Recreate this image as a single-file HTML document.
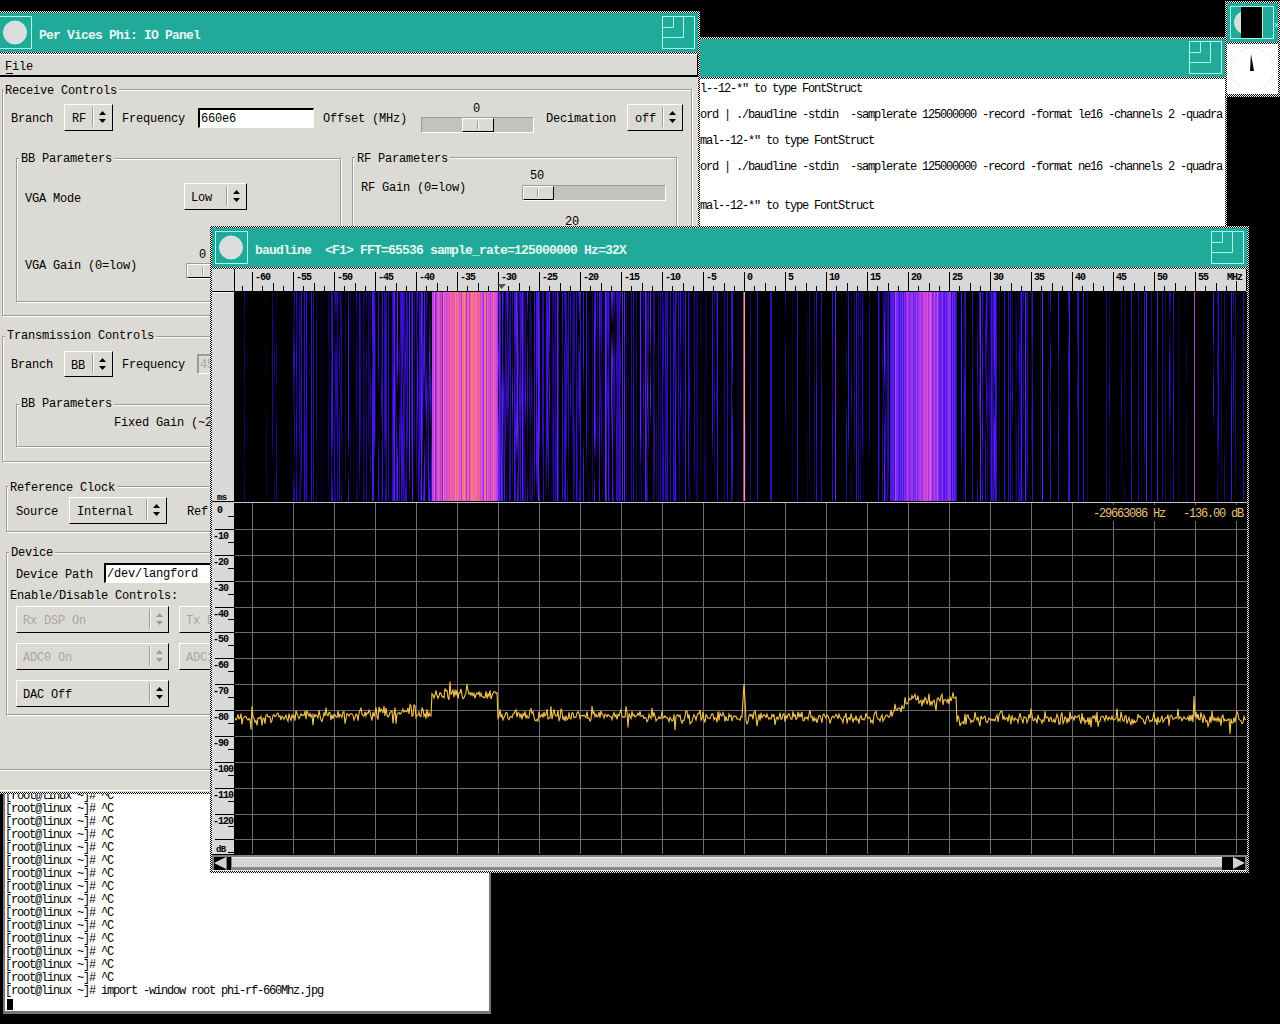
<!DOCTYPE html><html><head><meta charset="utf-8"><style>
html,body{margin:0;padding:0;background:#000;width:1280px;height:1024px;overflow:hidden;position:relative}
div,svg{position:absolute;box-sizing:border-box}
.t{white-space:pre;font-family:"Liberation Mono",monospace}
</style></head><body><div style="left:698px;top:37px;width:529px;height:200px;background:repeating-conic-gradient(#000 0 25%,#fff 0 50%) 0 0/2px 2px;"></div>
<div style="left:700px;top:39px;width:525px;height:38px;background:#21aa99"></div>
<svg style="left:1189px;top:41px" width="34" height="34"><g fill="none" stroke="#a8fcec" stroke-width="1"><rect x="0.5" y="0.5" width="32" height="32"/><path d="M0.5 21.5H21.5V0.5M0.5 11.5H11.5V0.5"/></g></svg>
<div style="left:700px;top:79px;width:525px;height:160px;background:#fff"></div>
<div class="t" style="left:700px;top:83px;font-size:12px;line-height:12px;color:#000;letter-spacing:-1.2px;">l--12-*" to type FontStruct</div>
<div class="t" style="left:700px;top:109px;font-size:12px;line-height:12px;color:#000;letter-spacing:-1.2px;">ord | ./baudline -stdin  -samplerate 125000000 -record -format le16 -channels 2 -quadra</div>
<div class="t" style="left:700px;top:135px;font-size:12px;line-height:12px;color:#000;letter-spacing:-1.2px;">mal--12-*" to type FontStruct</div>
<div class="t" style="left:700px;top:161px;font-size:12px;line-height:12px;color:#000;letter-spacing:-1.2px;">ord | ./baudline -stdin  -samplerate 125000000 -record -format ne16 -channels 2 -quadra</div>
<div class="t" style="left:700px;top:200px;font-size:12px;line-height:12px;color:#000;letter-spacing:-1.2px;">mal--12-*" to type FontStruct</div>
<div style="left:1225px;top:1px;width:55px;height:96px;background:repeating-conic-gradient(#000 0 25%,#fff 0 50%) 0 0/2px 2px;"></div>
<div style="left:1227px;top:3px;width:51px;height:39px;background:#21aa99"></div>
<svg style="left:1230px;top:6px" width="50" height="34"><circle cx="16" cy="16.5" r="11.5" fill="#dcdcdc" stroke="#c4f4ec"/><rect x="11" y="1" width="21" height="31" fill="#000"/><rect x="32" y="1" width="1" height="31" fill="#a8fcec"/><rect x="0.5" y="0.5" width="43" height="32" fill="none" stroke="#a8fcec"/><path d="M45 17L48 21M48 17L45 21" stroke="#a8fcec" stroke-width="1"/></svg>
<div style="left:1227px;top:44px;width:51px;height:50px;background:#fff"></div>
<svg style="left:1227px;top:44px" width="51" height="50"><circle cx="25.5" cy="25" r="21" fill="none" stroke="#ccc" stroke-width="1" stroke-dasharray="1 2.3"/><path d="M24 10 L27 27 L23 27 Z" fill="#000"/></svg>
<div style="left:0px;top:780px;width:491px;height:234px;background:#70787e"></div>
<div style="left:5px;top:780px;width:484px;height:231px;background:#fff"></div>
<div style="left:0px;top:780px;width:3px;height:234px;background:#000"></div>
<div class="t" style="left:5px;top:790px;font-size:12px;line-height:12px;color:#000;letter-spacing:-1.2px;">[root@linux ~]# ^C</div>
<div class="t" style="left:5px;top:803px;font-size:12px;line-height:12px;color:#000;letter-spacing:-1.2px;">[root@linux ~]# ^C</div>
<div class="t" style="left:5px;top:816px;font-size:12px;line-height:12px;color:#000;letter-spacing:-1.2px;">[root@linux ~]# ^C</div>
<div class="t" style="left:5px;top:829px;font-size:12px;line-height:12px;color:#000;letter-spacing:-1.2px;">[root@linux ~]# ^C</div>
<div class="t" style="left:5px;top:842px;font-size:12px;line-height:12px;color:#000;letter-spacing:-1.2px;">[root@linux ~]# ^C</div>
<div class="t" style="left:5px;top:855px;font-size:12px;line-height:12px;color:#000;letter-spacing:-1.2px;">[root@linux ~]# ^C</div>
<div class="t" style="left:5px;top:868px;font-size:12px;line-height:12px;color:#000;letter-spacing:-1.2px;">[root@linux ~]# ^C</div>
<div class="t" style="left:5px;top:881px;font-size:12px;line-height:12px;color:#000;letter-spacing:-1.2px;">[root@linux ~]# ^C</div>
<div class="t" style="left:5px;top:894px;font-size:12px;line-height:12px;color:#000;letter-spacing:-1.2px;">[root@linux ~]# ^C</div>
<div class="t" style="left:5px;top:907px;font-size:12px;line-height:12px;color:#000;letter-spacing:-1.2px;">[root@linux ~]# ^C</div>
<div class="t" style="left:5px;top:920px;font-size:12px;line-height:12px;color:#000;letter-spacing:-1.2px;">[root@linux ~]# ^C</div>
<div class="t" style="left:5px;top:933px;font-size:12px;line-height:12px;color:#000;letter-spacing:-1.2px;">[root@linux ~]# ^C</div>
<div class="t" style="left:5px;top:946px;font-size:12px;line-height:12px;color:#000;letter-spacing:-1.2px;">[root@linux ~]# ^C</div>
<div class="t" style="left:5px;top:959px;font-size:12px;line-height:12px;color:#000;letter-spacing:-1.2px;">[root@linux ~]# ^C</div>
<div class="t" style="left:5px;top:972px;font-size:12px;line-height:12px;color:#000;letter-spacing:-1.2px;">[root@linux ~]# ^C</div>
<div class="t" style="left:5px;top:985px;font-size:12px;line-height:12px;color:#000;letter-spacing:-1.2px;">[root@linux ~]# import -window root phi-rf-660Mhz.jpg</div>
<div style="left:7px;top:999px;width:6px;height:11px;background:#000"></div>
<div style="left:-2px;top:11px;width:702px;height:783px;background:repeating-conic-gradient(#000 0 25%,#fff 0 50%) 0 0/2px 2px;"></div>
<div style="left:0px;top:13px;width:698px;height:39px;background:#21aa99"></div>
<svg style="left:-1px;top:16px" width="34" height="34"><rect x="0.5" y="0.5" width="32" height="32" fill="none" stroke="#a8fcec"/><circle cx="16" cy="16.5" r="11.5" fill="#dcdcdc" stroke="#c4f4ec" stroke-width="1"/></svg>
<svg style="left:662px;top:16px" width="34" height="34"><g fill="none" stroke="#a8fcec" stroke-width="1"><rect x="0.5" y="0.5" width="32" height="32"/><path d="M0.5 21.5H21.5V0.5M0.5 11.5H11.5V0.5"/></g></svg>
<div class="t" style="left:39px;top:29px;font-size:13px;line-height:13px;color:#e4f6f2;letter-spacing:-0.8px;font-weight:bold;">Per Vices Phi: IO Panel</div>
<div style="left:0px;top:54px;width:698px;height:738px;background:#dcdad5"></div>
<div style="left:0px;top:54px;width:698px;height:23px;border-bottom:2px solid #000;border-right:1px solid #000;border-top:1px solid #fff"></div>
<div class="t" style="left:5px;top:61px;font-size:12px;line-height:12px;color:#000;letter-spacing:-0.2px;">File</div>
<div style="left:6px;top:73px;width:7px;height:1px;background:#000"></div>
<div style="left:3px;top:90px;width:690px;height:227px;border:1px solid #fff"></div>
<div style="left:2px;top:89px;width:690px;height:227px;border:1px solid #9d9b96"></div>
<div style="left:3px;top:88px;width:116px;height:4px;background:#dcdad5"></div>
<div class="t" style="left:5px;top:85px;font-size:12px;line-height:12px;color:#000;letter-spacing:-0.2px;">Receive Controls</div>
<div class="t" style="left:11px;top:113px;font-size:12px;line-height:12px;color:#000;letter-spacing:-0.2px;">Branch</div>
<div style="left:64px;top:104px;width:49px;height:27px;background:#dcdad5;border-top:1px solid #fff;border-left:1px solid #fff;border-right:1px solid #000;border-bottom:1px solid #000"></div>
<div class="t" style="left:72px;top:113px;font-size:12px;line-height:12px;color:#000;letter-spacing:-0.2px;">RF</div>
<div style="left:92px;top:107px;width:1px;height:20px;background:#9d9b96"></div>
<div style="left:93px;top:107px;width:1px;height:20px;background:#fff"></div>
<svg style="left:99px;top:111px" width="8" height="13"><path d="M0 4H7L3.5 0Z M0 8H7L3.5 12Z" fill="#000"/></svg>
<div class="t" style="left:122px;top:113px;font-size:12px;line-height:12px;color:#000;letter-spacing:-0.2px;">Frequency</div>
<div style="left:198px;top:108px;width:116px;height:20px;background:#fff;border-top:2px solid #000;border-left:2px solid #000;border-right:1px solid #fff;border-bottom:1px solid #fff"></div>
<div class="t" style="left:201px;top:113px;font-size:12px;line-height:12px;color:#000;letter-spacing:-0.2px;">660e6</div>
<div class="t" style="left:323px;top:113px;font-size:12px;line-height:12px;color:#000;letter-spacing:-0.2px;">Offset (MHz)</div>
<div class="t" style="left:473px;top:103px;font-size:12px;line-height:12px;color:#000;letter-spacing:-0.2px;">0</div>
<div style="left:421px;top:117px;width:113px;height:16px;background:#c4c2bd;border-top:1px solid #9d9b96;border-left:1px solid #9d9b96;border-right:1px solid #fff;border-bottom:1px solid #fff"></div>
<div style="left:462px;top:118px;width:32px;height:14px;background:#dcdad5;border-top:1px solid #fff;border-left:1px solid #fff;border-right:1px solid #000;border-bottom:1px solid #000"></div>
<div style="left:477px;top:121px;width:1px;height:8px;background:#9d9b96"></div>
<div style="left:478px;top:121px;width:1px;height:8px;background:#fff"></div>
<div class="t" style="left:546px;top:113px;font-size:12px;line-height:12px;color:#000;letter-spacing:-0.2px;">Decimation</div>
<div style="left:627px;top:104px;width:56px;height:27px;background:#dcdad5;border-top:1px solid #fff;border-left:1px solid #fff;border-right:1px solid #000;border-bottom:1px solid #000"></div>
<div class="t" style="left:635px;top:113px;font-size:12px;line-height:12px;color:#000;letter-spacing:-0.2px;">off</div>
<div style="left:662px;top:107px;width:1px;height:20px;background:#9d9b96"></div>
<div style="left:663px;top:107px;width:1px;height:20px;background:#fff"></div>
<svg style="left:669px;top:111px" width="8" height="13"><path d="M0 4H7L3.5 0Z M0 8H7L3.5 12Z" fill="#000"/></svg>
<div style="left:17px;top:159px;width:325px;height:144px;border:1px solid #fff"></div>
<div style="left:16px;top:158px;width:325px;height:144px;border:1px solid #9d9b96"></div>
<div style="left:19px;top:157px;width:95px;height:4px;background:#dcdad5"></div>
<div class="t" style="left:21px;top:153px;font-size:12px;line-height:12px;color:#000;letter-spacing:-0.2px;">BB Parameters</div>
<div class="t" style="left:25px;top:193px;font-size:12px;line-height:12px;color:#000;letter-spacing:-0.2px;">VGA Mode</div>
<div style="left:184px;top:183px;width:63px;height:27px;background:#dcdad5;border-top:1px solid #fff;border-left:1px solid #fff;border-right:1px solid #000;border-bottom:1px solid #000"></div>
<div class="t" style="left:191px;top:192px;font-size:12px;line-height:12px;color:#000;letter-spacing:-0.2px;">Low</div>
<div style="left:226px;top:186px;width:1px;height:20px;background:#9d9b96"></div>
<div style="left:227px;top:186px;width:1px;height:20px;background:#fff"></div>
<svg style="left:233px;top:190px" width="8" height="13"><path d="M0 4H7L3.5 0Z M0 8H7L3.5 12Z" fill="#000"/></svg>
<div class="t" style="left:25px;top:260px;font-size:12px;line-height:12px;color:#000;letter-spacing:-0.2px;">VGA Gain (0=low)</div>
<div class="t" style="left:199px;top:249px;font-size:12px;line-height:12px;color:#000;letter-spacing:-0.2px;">0</div>
<div style="left:186px;top:263px;width:113px;height:16px;background:#c4c2bd;border-top:1px solid #9d9b96;border-left:1px solid #9d9b96;border-right:1px solid #fff;border-bottom:1px solid #fff"></div>
<div style="left:187px;top:264px;width:32px;height:14px;background:#dcdad5;border-top:1px solid #fff;border-left:1px solid #fff;border-right:1px solid #000;border-bottom:1px solid #000"></div>
<div style="left:202px;top:267px;width:1px;height:8px;background:#9d9b96"></div>
<div style="left:203px;top:267px;width:1px;height:8px;background:#fff"></div>
<div style="left:353px;top:158px;width:325px;height:149px;border:1px solid #fff"></div>
<div style="left:352px;top:157px;width:325px;height:149px;border:1px solid #9d9b96"></div>
<div style="left:355px;top:156px;width:95px;height:4px;background:#dcdad5"></div>
<div class="t" style="left:357px;top:153px;font-size:12px;line-height:12px;color:#000;letter-spacing:-0.2px;">RF Parameters</div>
<div class="t" style="left:361px;top:182px;font-size:12px;line-height:12px;color:#000;letter-spacing:-0.2px;">RF Gain (0=low)</div>
<div class="t" style="left:530px;top:170px;font-size:12px;line-height:12px;color:#000;letter-spacing:-0.2px;">50</div>
<div style="left:522px;top:185px;width:144px;height:16px;background:#c4c2bd;border-top:1px solid #9d9b96;border-left:1px solid #9d9b96;border-right:1px solid #fff;border-bottom:1px solid #fff"></div>
<div style="left:523px;top:186px;width:31px;height:14px;background:#dcdad5;border-top:1px solid #fff;border-left:1px solid #fff;border-right:1px solid #000;border-bottom:1px solid #000"></div>
<div style="left:537px;top:189px;width:1px;height:8px;background:#9d9b96"></div>
<div style="left:538px;top:189px;width:1px;height:8px;background:#fff"></div>
<div class="t" style="left:565px;top:216px;font-size:12px;line-height:12px;color:#000;letter-spacing:-0.2px;">20</div>
<div style="left:3px;top:337px;width:690px;height:126px;border:1px solid #fff"></div>
<div style="left:2px;top:336px;width:690px;height:126px;border:1px solid #9d9b96"></div>
<div style="left:5px;top:335px;width:151px;height:4px;background:#dcdad5"></div>
<div class="t" style="left:7px;top:330px;font-size:12px;line-height:12px;color:#000;letter-spacing:-0.2px;">Transmission Controls</div>
<div class="t" style="left:11px;top:359px;font-size:12px;line-height:12px;color:#000;letter-spacing:-0.2px;">Branch</div>
<div style="left:64px;top:351px;width:49px;height:26px;background:#dcdad5;border-top:1px solid #fff;border-left:1px solid #fff;border-right:1px solid #000;border-bottom:1px solid #000"></div>
<div class="t" style="left:71px;top:360px;font-size:12px;line-height:12px;color:#000;letter-spacing:-0.2px;">BB</div>
<div style="left:92px;top:354px;width:1px;height:19px;background:#9d9b96"></div>
<div style="left:93px;top:354px;width:1px;height:19px;background:#fff"></div>
<svg style="left:99px;top:358px" width="8" height="13"><path d="M0 4H7L3.5 0Z M0 8H7L3.5 12Z" fill="#000"/></svg>
<div class="t" style="left:122px;top:359px;font-size:12px;line-height:12px;color:#000;letter-spacing:-0.2px;">Frequency</div>
<div style="left:197px;top:354px;width:116px;height:20px;background:#dcdad5;border-top:2px solid #9d9b96;border-left:2px solid #9d9b96;border-right:1px solid #fff;border-bottom:1px solid #fff"></div>
<div class="t" style="left:200px;top:359px;font-size:12px;line-height:12px;color:#a8a6a1;letter-spacing:-0.2px;">45</div>
<div style="left:17px;top:405px;width:325px;height:43px;border:1px solid #fff"></div>
<div style="left:16px;top:404px;width:325px;height:43px;border:1px solid #9d9b96"></div>
<div style="left:19px;top:403px;width:95px;height:4px;background:#dcdad5"></div>
<div class="t" style="left:21px;top:398px;font-size:12px;line-height:12px;color:#000;letter-spacing:-0.2px;">BB Parameters</div>
<div class="t" style="left:114px;top:417px;font-size:12px;line-height:12px;color:#000;letter-spacing:-0.2px;">Fixed Gain (~20 dB)</div>
<div style="left:7px;top:487px;width:319px;height:46px;border:1px solid #fff"></div>
<div style="left:6px;top:486px;width:319px;height:46px;border:1px solid #9d9b96"></div>
<div style="left:8px;top:485px;width:109px;height:4px;background:#dcdad5"></div>
<div class="t" style="left:10px;top:482px;font-size:12px;line-height:12px;color:#000;letter-spacing:-0.2px;">Reference Clock</div>
<div class="t" style="left:16px;top:506px;font-size:12px;line-height:12px;color:#000;letter-spacing:-0.2px;">Source</div>
<div style="left:69px;top:497px;width:98px;height:27px;background:#dcdad5;border-top:1px solid #fff;border-left:1px solid #fff;border-right:1px solid #000;border-bottom:1px solid #000"></div>
<div class="t" style="left:77px;top:506px;font-size:12px;line-height:12px;color:#000;letter-spacing:-0.2px;">Internal</div>
<div style="left:146px;top:500px;width:1px;height:20px;background:#9d9b96"></div>
<div style="left:147px;top:500px;width:1px;height:20px;background:#fff"></div>
<svg style="left:153px;top:504px" width="8" height="13"><path d="M0 4H7L3.5 0Z M0 8H7L3.5 12Z" fill="#000"/></svg>
<div class="t" style="left:187px;top:506px;font-size:12px;line-height:12px;color:#000;letter-spacing:-0.2px;">Ref</div>
<div style="left:7px;top:553px;width:685px;height:163px;border:1px solid #fff"></div>
<div style="left:6px;top:552px;width:685px;height:163px;border:1px solid #9d9b96"></div>
<div style="left:9px;top:551px;width:46px;height:4px;background:#dcdad5"></div>
<div class="t" style="left:11px;top:547px;font-size:12px;line-height:12px;color:#000;letter-spacing:-0.2px;">Device</div>
<div class="t" style="left:16px;top:569px;font-size:12px;line-height:12px;color:#000;letter-spacing:-0.2px;">Device Path</div>
<div style="left:104px;top:563px;width:130px;height:20px;background:#fff;border-top:2px solid #000;border-left:2px solid #000;border-right:1px solid #fff;border-bottom:1px solid #fff"></div>
<div class="t" style="left:107px;top:568px;font-size:12px;line-height:12px;color:#000;letter-spacing:-0.2px;">/dev/langford</div>
<div class="t" style="left:10px;top:590px;font-size:12px;line-height:12px;color:#000;letter-spacing:-0.2px;">Enable/Disable Controls:</div>
<div style="left:16px;top:606px;width:153px;height:27px;background:#dcdad5;border-top:1px solid #fff;border-left:1px solid #fff;border-right:1px solid #000;border-bottom:1px solid #000"></div>
<div class="t" style="left:23px;top:615px;font-size:12px;line-height:12px;color:#a8a6a1;letter-spacing:-0.2px;">Rx DSP On</div>
<div style="left:149px;top:609px;width:1px;height:20px;background:#9d9b96"></div>
<div style="left:150px;top:609px;width:1px;height:20px;background:#fff"></div>
<svg style="left:156px;top:613px" width="8" height="13"><path d="M0 4H7L3.5 0Z M0 8H7L3.5 12Z" fill="#9d9b96"/></svg>
<div style="left:179px;top:606px;width:153px;height:27px;background:#dcdad5;border-top:1px solid #fff;border-left:1px solid #fff;border-right:1px solid #000;border-bottom:1px solid #000"></div>
<div class="t" style="left:186px;top:615px;font-size:12px;line-height:12px;color:#a8a6a1;letter-spacing:-0.2px;">Tx DSP On</div>
<div style="left:312px;top:609px;width:1px;height:20px;background:#9d9b96"></div>
<div style="left:313px;top:609px;width:1px;height:20px;background:#fff"></div>
<svg style="left:319px;top:613px" width="8" height="13"><path d="M0 4H7L3.5 0Z M0 8H7L3.5 12Z" fill="#9d9b96"/></svg>
<div style="left:16px;top:643px;width:153px;height:27px;background:#dcdad5;border-top:1px solid #fff;border-left:1px solid #fff;border-right:1px solid #000;border-bottom:1px solid #000"></div>
<div class="t" style="left:23px;top:652px;font-size:12px;line-height:12px;color:#a8a6a1;letter-spacing:-0.2px;">ADC0 On</div>
<div style="left:149px;top:646px;width:1px;height:20px;background:#9d9b96"></div>
<div style="left:150px;top:646px;width:1px;height:20px;background:#fff"></div>
<svg style="left:156px;top:650px" width="8" height="13"><path d="M0 4H7L3.5 0Z M0 8H7L3.5 12Z" fill="#9d9b96"/></svg>
<div style="left:179px;top:643px;width:153px;height:27px;background:#dcdad5;border-top:1px solid #fff;border-left:1px solid #fff;border-right:1px solid #000;border-bottom:1px solid #000"></div>
<div class="t" style="left:186px;top:652px;font-size:12px;line-height:12px;color:#a8a6a1;letter-spacing:-0.2px;">ADC1 On</div>
<div style="left:312px;top:646px;width:1px;height:20px;background:#9d9b96"></div>
<div style="left:313px;top:646px;width:1px;height:20px;background:#fff"></div>
<svg style="left:319px;top:650px" width="8" height="13"><path d="M0 4H7L3.5 0Z M0 8H7L3.5 12Z" fill="#9d9b96"/></svg>
<div style="left:16px;top:680px;width:153px;height:27px;background:#dcdad5;border-top:1px solid #fff;border-left:1px solid #fff;border-right:1px solid #000;border-bottom:1px solid #000"></div>
<div class="t" style="left:23px;top:689px;font-size:12px;line-height:12px;color:#000;letter-spacing:-0.2px;">DAC Off</div>
<div style="left:149px;top:683px;width:1px;height:20px;background:#9d9b96"></div>
<div style="left:150px;top:683px;width:1px;height:20px;background:#fff"></div>
<svg style="left:156px;top:687px" width="8" height="13"><path d="M0 4H7L3.5 0Z M0 8H7L3.5 12Z" fill="#000"/></svg>
<div style="left:0px;top:769px;width:698px;height:2px;border-top:1px solid #9d9b96;border-bottom:1px solid #fff"></div>
<div style="left:0px;top:790px;width:698px;height:1px;background:#fff"></div>
<div style="left:210px;top:226px;width:1039px;height:647px;background:repeating-conic-gradient(#000 0 25%,#fff 0 50%) 0 0/2px 2px;"></div>
<div style="left:212px;top:228px;width:1035px;height:39px;background:#21aa99"></div>
<svg style="left:215px;top:231px" width="34" height="34"><rect x="0.5" y="0.5" width="32" height="32" fill="none" stroke="#a8fcec"/><circle cx="16" cy="16.5" r="11.5" fill="#dcdcdc" stroke="#c4f4ec" stroke-width="1"/></svg>
<svg style="left:1211px;top:231px" width="34" height="34"><g fill="none" stroke="#a8fcec" stroke-width="1"><rect x="0.5" y="0.5" width="32" height="32"/><path d="M0.5 21.5H21.5V0.5M0.5 11.5H11.5V0.5"/></g></svg>
<div class="t" style="left:255px;top:244px;font-size:13px;line-height:13px;color:#e4f6f2;letter-spacing:-0.8px;font-weight:bold;">baudline  &lt;F1&gt; FFT=65536 sample_rate=125000000 Hz=32X</div>
<div style="left:212px;top:269px;width:1035px;height:602px;background:#d8d8d8"></div>
<div style="left:234px;top:269px;width:1px;height:586px;background:#000"></div>
<div style="left:212px;top:291px;width:1034px;height:1px;background:#000"></div>
<div style="left:212px;top:292px;width:22px;height:1px;background:#f4f4f4"></div>
<div style="left:1246px;top:269px;width:1px;height:22px;background:#000"></div>
<svg style="left:0px;top:0px" width="1280" height="1024"><g fill="#000"><rect x="242" y="286" width="1" height="5"/><rect x="252" y="272" width="1" height="19"/><rect x="262" y="286" width="1" height="5"/><rect x="273" y="283" width="1" height="8"/><rect x="283" y="286" width="1" height="5"/><rect x="293" y="272" width="1" height="19"/><rect x="303" y="286" width="1" height="5"/><rect x="314" y="283" width="1" height="8"/><rect x="324" y="286" width="1" height="5"/><rect x="334" y="272" width="1" height="19"/><rect x="344" y="286" width="1" height="5"/><rect x="355" y="283" width="1" height="8"/><rect x="365" y="286" width="1" height="5"/><rect x="375" y="272" width="1" height="19"/><rect x="385" y="286" width="1" height="5"/><rect x="396" y="283" width="1" height="8"/><rect x="406" y="286" width="1" height="5"/><rect x="416" y="272" width="1" height="19"/><rect x="426" y="286" width="1" height="5"/><rect x="437" y="283" width="1" height="8"/><rect x="447" y="286" width="1" height="5"/><rect x="457" y="272" width="1" height="19"/><rect x="467" y="286" width="1" height="5"/><rect x="478" y="283" width="1" height="8"/><rect x="488" y="286" width="1" height="5"/><rect x="498" y="272" width="1" height="19"/><rect x="508" y="286" width="1" height="5"/><rect x="519" y="283" width="1" height="8"/><rect x="529" y="286" width="1" height="5"/><rect x="539" y="272" width="1" height="19"/><rect x="549" y="286" width="1" height="5"/><rect x="560" y="283" width="1" height="8"/><rect x="570" y="286" width="1" height="5"/><rect x="580" y="272" width="1" height="19"/><rect x="590" y="286" width="1" height="5"/><rect x="601" y="283" width="1" height="8"/><rect x="611" y="286" width="1" height="5"/><rect x="621" y="272" width="1" height="19"/><rect x="631" y="286" width="1" height="5"/><rect x="642" y="283" width="1" height="8"/><rect x="652" y="286" width="1" height="5"/><rect x="662" y="272" width="1" height="19"/><rect x="672" y="286" width="1" height="5"/><rect x="683" y="283" width="1" height="8"/><rect x="693" y="286" width="1" height="5"/><rect x="703" y="272" width="1" height="19"/><rect x="713" y="286" width="1" height="5"/><rect x="724" y="283" width="1" height="8"/><rect x="734" y="286" width="1" height="5"/><rect x="744" y="272" width="1" height="19"/><rect x="754" y="286" width="1" height="5"/><rect x="765" y="283" width="1" height="8"/><rect x="775" y="286" width="1" height="5"/><rect x="785" y="272" width="1" height="19"/><rect x="795" y="286" width="1" height="5"/><rect x="806" y="283" width="1" height="8"/><rect x="816" y="286" width="1" height="5"/><rect x="826" y="272" width="1" height="19"/><rect x="836" y="286" width="1" height="5"/><rect x="847" y="283" width="1" height="8"/><rect x="857" y="286" width="1" height="5"/><rect x="867" y="272" width="1" height="19"/><rect x="877" y="286" width="1" height="5"/><rect x="888" y="283" width="1" height="8"/><rect x="898" y="286" width="1" height="5"/><rect x="908" y="272" width="1" height="19"/><rect x="918" y="286" width="1" height="5"/><rect x="929" y="283" width="1" height="8"/><rect x="939" y="286" width="1" height="5"/><rect x="949" y="272" width="1" height="19"/><rect x="959" y="286" width="1" height="5"/><rect x="970" y="283" width="1" height="8"/><rect x="980" y="286" width="1" height="5"/><rect x="990" y="272" width="1" height="19"/><rect x="1000" y="286" width="1" height="5"/><rect x="1011" y="283" width="1" height="8"/><rect x="1021" y="286" width="1" height="5"/><rect x="1031" y="272" width="1" height="19"/><rect x="1041" y="286" width="1" height="5"/><rect x="1052" y="283" width="1" height="8"/><rect x="1062" y="286" width="1" height="5"/><rect x="1072" y="272" width="1" height="19"/><rect x="1082" y="286" width="1" height="5"/><rect x="1093" y="283" width="1" height="8"/><rect x="1103" y="286" width="1" height="5"/><rect x="1113" y="272" width="1" height="19"/><rect x="1123" y="286" width="1" height="5"/><rect x="1134" y="283" width="1" height="8"/><rect x="1144" y="286" width="1" height="5"/><rect x="1154" y="272" width="1" height="19"/><rect x="1164" y="286" width="1" height="5"/><rect x="1175" y="283" width="1" height="8"/><rect x="1185" y="286" width="1" height="5"/><rect x="1195" y="272" width="1" height="19"/><rect x="1205" y="286" width="1" height="5"/><rect x="1216" y="283" width="1" height="8"/><rect x="1226" y="286" width="1" height="5"/><rect x="1236" y="281" width="1" height="10"/></g></svg>
<div class="t" style="left:255px;top:273px;font-size:10px;line-height:10px;color:#000;letter-spacing:-1.0px;font-weight:bold;">-60</div>
<div class="t" style="left:296px;top:273px;font-size:10px;line-height:10px;color:#000;letter-spacing:-1.0px;font-weight:bold;">-55</div>
<div class="t" style="left:337px;top:273px;font-size:10px;line-height:10px;color:#000;letter-spacing:-1.0px;font-weight:bold;">-50</div>
<div class="t" style="left:378px;top:273px;font-size:10px;line-height:10px;color:#000;letter-spacing:-1.0px;font-weight:bold;">-45</div>
<div class="t" style="left:419px;top:273px;font-size:10px;line-height:10px;color:#000;letter-spacing:-1.0px;font-weight:bold;">-40</div>
<div class="t" style="left:460px;top:273px;font-size:10px;line-height:10px;color:#000;letter-spacing:-1.0px;font-weight:bold;">-35</div>
<div class="t" style="left:501px;top:273px;font-size:10px;line-height:10px;color:#000;letter-spacing:-1.0px;font-weight:bold;">-30</div>
<div class="t" style="left:542px;top:273px;font-size:10px;line-height:10px;color:#000;letter-spacing:-1.0px;font-weight:bold;">-25</div>
<div class="t" style="left:583px;top:273px;font-size:10px;line-height:10px;color:#000;letter-spacing:-1.0px;font-weight:bold;">-20</div>
<div class="t" style="left:624px;top:273px;font-size:10px;line-height:10px;color:#000;letter-spacing:-1.0px;font-weight:bold;">-15</div>
<div class="t" style="left:665px;top:273px;font-size:10px;line-height:10px;color:#000;letter-spacing:-1.0px;font-weight:bold;">-10</div>
<div class="t" style="left:706px;top:273px;font-size:10px;line-height:10px;color:#000;letter-spacing:-1.0px;font-weight:bold;">-5</div>
<div class="t" style="left:747px;top:273px;font-size:10px;line-height:10px;color:#000;letter-spacing:-1.0px;font-weight:bold;">0</div>
<div class="t" style="left:788px;top:273px;font-size:10px;line-height:10px;color:#000;letter-spacing:-1.0px;font-weight:bold;">5</div>
<div class="t" style="left:829px;top:273px;font-size:10px;line-height:10px;color:#000;letter-spacing:-1.0px;font-weight:bold;">10</div>
<div class="t" style="left:870px;top:273px;font-size:10px;line-height:10px;color:#000;letter-spacing:-1.0px;font-weight:bold;">15</div>
<div class="t" style="left:911px;top:273px;font-size:10px;line-height:10px;color:#000;letter-spacing:-1.0px;font-weight:bold;">20</div>
<div class="t" style="left:952px;top:273px;font-size:10px;line-height:10px;color:#000;letter-spacing:-1.0px;font-weight:bold;">25</div>
<div class="t" style="left:993px;top:273px;font-size:10px;line-height:10px;color:#000;letter-spacing:-1.0px;font-weight:bold;">30</div>
<div class="t" style="left:1034px;top:273px;font-size:10px;line-height:10px;color:#000;letter-spacing:-1.0px;font-weight:bold;">35</div>
<div class="t" style="left:1075px;top:273px;font-size:10px;line-height:10px;color:#000;letter-spacing:-1.0px;font-weight:bold;">40</div>
<div class="t" style="left:1116px;top:273px;font-size:10px;line-height:10px;color:#000;letter-spacing:-1.0px;font-weight:bold;">45</div>
<div class="t" style="left:1157px;top:273px;font-size:10px;line-height:10px;color:#000;letter-spacing:-1.0px;font-weight:bold;">50</div>
<div class="t" style="left:1198px;top:273px;font-size:10px;line-height:10px;color:#000;letter-spacing:-1.0px;font-weight:bold;">55</div>
<div class="t" style="left:1227px;top:273px;font-size:10px;line-height:10px;color:#000;letter-spacing:-1.0px;font-weight:bold;">MHz</div>
<svg style="left:497px;top:284px" width="10" height="6"><path d="M0 0H9L4.5 5Z" fill="#555"/></svg>
<svg style="left:235px;top:292px" width="1012" height="209"><rect width="100%" height="100%" fill="#000"/><defs><linearGradient id="f0" x1="0" y1="0" x2="0" y2="1"><stop offset="0.00" stop-opacity="0.00"/><stop offset="0.17" stop-opacity="0.00"/><stop offset="0.33" stop-opacity="0.34"/><stop offset="0.50" stop-opacity="0.48"/><stop offset="0.67" stop-opacity="0.00"/><stop offset="0.83" stop-opacity="0.32"/><stop offset="1.00" stop-opacity="0.00"/></linearGradient><linearGradient id="f1" x1="0" y1="0" x2="0" y2="1"><stop offset="0.00" stop-opacity="0.00"/><stop offset="0.17" stop-opacity="0.00"/><stop offset="0.33" stop-opacity="0.00"/><stop offset="0.50" stop-opacity="1.00"/><stop offset="0.67" stop-opacity="0.00"/><stop offset="0.83" stop-opacity="0.00"/><stop offset="1.00" stop-opacity="0.77"/></linearGradient><linearGradient id="f2" x1="0" y1="0" x2="0" y2="1"><stop offset="0.00" stop-opacity="0.50"/><stop offset="0.17" stop-opacity="1.00"/><stop offset="0.33" stop-opacity="0.00"/><stop offset="0.50" stop-opacity="1.00"/><stop offset="0.67" stop-opacity="0.00"/><stop offset="0.83" stop-opacity="0.00"/><stop offset="1.00" stop-opacity="0.00"/></linearGradient><linearGradient id="f3" x1="0" y1="0" x2="0" y2="1"><stop offset="0.00" stop-opacity="0.00"/><stop offset="0.17" stop-opacity="1.00"/><stop offset="0.33" stop-opacity="0.00"/><stop offset="0.50" stop-opacity="0.62"/><stop offset="0.67" stop-opacity="0.00"/><stop offset="0.83" stop-opacity="0.33"/><stop offset="1.00" stop-opacity="0.00"/></linearGradient><linearGradient id="f4" x1="0" y1="0" x2="0" y2="1"><stop offset="0.00" stop-opacity="0.00"/><stop offset="0.17" stop-opacity="0.51"/><stop offset="0.33" stop-opacity="0.00"/><stop offset="0.50" stop-opacity="0.53"/><stop offset="0.67" stop-opacity="0.00"/><stop offset="0.83" stop-opacity="0.65"/><stop offset="1.00" stop-opacity="0.00"/></linearGradient><linearGradient id="f5" x1="0" y1="0" x2="0" y2="1"><stop offset="0.00" stop-opacity="0.56"/><stop offset="0.17" stop-opacity="1.00"/><stop offset="0.33" stop-opacity="0.44"/><stop offset="0.50" stop-opacity="1.00"/><stop offset="0.67" stop-opacity="0.00"/><stop offset="0.83" stop-opacity="0.00"/><stop offset="1.00" stop-opacity="0.38"/></linearGradient><linearGradient id="f6" x1="0" y1="0" x2="0" y2="1"><stop offset="0.00" stop-opacity="0.32"/><stop offset="0.17" stop-opacity="0.68"/><stop offset="0.33" stop-opacity="0.74"/><stop offset="0.50" stop-opacity="0.00"/><stop offset="0.67" stop-opacity="0.60"/><stop offset="0.83" stop-opacity="0.53"/><stop offset="1.00" stop-opacity="1.00"/></linearGradient><linearGradient id="f7" x1="0" y1="0" x2="0" y2="1"><stop offset="0.00" stop-opacity="1.00"/><stop offset="0.17" stop-opacity="0.63"/><stop offset="0.33" stop-opacity="0.00"/><stop offset="0.50" stop-opacity="0.62"/><stop offset="0.67" stop-opacity="1.00"/><stop offset="0.83" stop-opacity="1.00"/><stop offset="1.00" stop-opacity="0.00"/></linearGradient><linearGradient id="f8" x1="0" y1="0" x2="0" y2="1"><stop offset="0.00" stop-opacity="0.00"/><stop offset="0.17" stop-opacity="0.31"/><stop offset="0.33" stop-opacity="0.38"/><stop offset="0.50" stop-opacity="0.00"/><stop offset="0.67" stop-opacity="0.00"/><stop offset="0.83" stop-opacity="0.36"/><stop offset="1.00" stop-opacity="0.00"/></linearGradient><linearGradient id="f9" x1="0" y1="0" x2="0" y2="1"><stop offset="0.00" stop-opacity="0.00"/><stop offset="0.17" stop-opacity="1.00"/><stop offset="0.33" stop-opacity="0.00"/><stop offset="0.50" stop-opacity="0.00"/><stop offset="0.67" stop-opacity="0.74"/><stop offset="0.83" stop-opacity="1.00"/><stop offset="1.00" stop-opacity="1.00"/></linearGradient><linearGradient id="f10" x1="0" y1="0" x2="0" y2="1"><stop offset="0.00" stop-opacity="0.00"/><stop offset="0.17" stop-opacity="0.00"/><stop offset="0.33" stop-opacity="0.00"/><stop offset="0.50" stop-opacity="1.00"/><stop offset="0.67" stop-opacity="1.00"/><stop offset="0.83" stop-opacity="0.00"/><stop offset="1.00" stop-opacity="0.00"/></linearGradient><linearGradient id="f11" x1="0" y1="0" x2="0" y2="1"><stop offset="0.00" stop-opacity="0.00"/><stop offset="0.17" stop-opacity="0.00"/><stop offset="0.33" stop-opacity="0.59"/><stop offset="0.50" stop-opacity="0.00"/><stop offset="0.67" stop-opacity="0.00"/><stop offset="0.83" stop-opacity="0.00"/><stop offset="1.00" stop-opacity="0.00"/></linearGradient><linearGradient id="f12" x1="0" y1="0" x2="0" y2="1"><stop offset="0.00" stop-opacity="0.78"/><stop offset="0.17" stop-opacity="0.56"/><stop offset="0.33" stop-opacity="0.64"/><stop offset="0.50" stop-opacity="0.00"/><stop offset="0.67" stop-opacity="1.00"/><stop offset="0.83" stop-opacity="0.74"/><stop offset="1.00" stop-opacity="0.50"/></linearGradient><linearGradient id="f13" x1="0" y1="0" x2="0" y2="1"><stop offset="0.00" stop-opacity="0.00"/><stop offset="0.17" stop-opacity="0.00"/><stop offset="0.33" stop-opacity="0.33"/><stop offset="0.50" stop-opacity="0.00"/><stop offset="0.67" stop-opacity="0.00"/><stop offset="0.83" stop-opacity="0.00"/><stop offset="1.00" stop-opacity="0.00"/></linearGradient><linearGradient id="f14" x1="0" y1="0" x2="0" y2="1"><stop offset="0.00" stop-opacity="0.00"/><stop offset="0.17" stop-opacity="0.00"/><stop offset="0.33" stop-opacity="0.00"/><stop offset="0.50" stop-opacity="0.00"/><stop offset="0.67" stop-opacity="0.00"/><stop offset="0.83" stop-opacity="0.00"/><stop offset="1.00" stop-opacity="1.00"/></linearGradient><linearGradient id="f15" x1="0" y1="0" x2="0" y2="1"><stop offset="0.00" stop-opacity="0.37"/><stop offset="0.17" stop-opacity="0.00"/><stop offset="0.33" stop-opacity="0.00"/><stop offset="0.50" stop-opacity="0.00"/><stop offset="0.67" stop-opacity="0.00"/><stop offset="0.83" stop-opacity="1.00"/><stop offset="1.00" stop-opacity="1.00"/></linearGradient><linearGradient id="f16" x1="0" y1="0" x2="0" y2="1"><stop offset="0.00" stop-opacity="0.54"/><stop offset="0.17" stop-opacity="0.00"/><stop offset="0.33" stop-opacity="0.00"/><stop offset="0.50" stop-opacity="0.00"/><stop offset="0.67" stop-opacity="0.00"/><stop offset="0.83" stop-opacity="1.00"/><stop offset="1.00" stop-opacity="0.00"/></linearGradient><linearGradient id="f17" x1="0" y1="0" x2="0" y2="1"><stop offset="0.00" stop-opacity="0.00"/><stop offset="0.17" stop-opacity="1.00"/><stop offset="0.33" stop-opacity="0.37"/><stop offset="0.50" stop-opacity="0.31"/><stop offset="0.67" stop-opacity="0.79"/><stop offset="0.83" stop-opacity="1.00"/><stop offset="1.00" stop-opacity="0.43"/></linearGradient><linearGradient id="f18" x1="0" y1="0" x2="0" y2="1"><stop offset="0.00" stop-opacity="0.00"/><stop offset="0.17" stop-opacity="0.00"/><stop offset="0.33" stop-opacity="0.57"/><stop offset="0.50" stop-opacity="0.46"/><stop offset="0.67" stop-opacity="0.00"/><stop offset="0.83" stop-opacity="1.00"/><stop offset="1.00" stop-opacity="1.00"/></linearGradient><linearGradient id="f19" x1="0" y1="0" x2="0" y2="1"><stop offset="0.00" stop-opacity="1.00"/><stop offset="0.17" stop-opacity="1.00"/><stop offset="0.33" stop-opacity="1.00"/><stop offset="0.50" stop-opacity="0.41"/><stop offset="0.67" stop-opacity="0.48"/><stop offset="0.83" stop-opacity="0.00"/><stop offset="1.00" stop-opacity="0.00"/></linearGradient><linearGradient id="f20" x1="0" y1="0" x2="0" y2="1"><stop offset="0.00" stop-opacity="0.00"/><stop offset="0.17" stop-opacity="0.00"/><stop offset="0.33" stop-opacity="0.78"/><stop offset="0.50" stop-opacity="0.00"/><stop offset="0.67" stop-opacity="1.00"/><stop offset="0.83" stop-opacity="1.00"/><stop offset="1.00" stop-opacity="1.00"/></linearGradient><linearGradient id="f21" x1="0" y1="0" x2="0" y2="1"><stop offset="0.00" stop-opacity="0.00"/><stop offset="0.17" stop-opacity="0.00"/><stop offset="0.33" stop-opacity="0.00"/><stop offset="0.50" stop-opacity="0.00"/><stop offset="0.67" stop-opacity="0.00"/><stop offset="0.83" stop-opacity="0.75"/><stop offset="1.00" stop-opacity="1.00"/></linearGradient><linearGradient id="f22" x1="0" y1="0" x2="0" y2="1"><stop offset="0.00" stop-opacity="0.63"/><stop offset="0.17" stop-opacity="0.34"/><stop offset="0.33" stop-opacity="0.75"/><stop offset="0.50" stop-opacity="0.68"/><stop offset="0.67" stop-opacity="0.39"/><stop offset="0.83" stop-opacity="0.47"/><stop offset="1.00" stop-opacity="1.00"/></linearGradient><linearGradient id="f23" x1="0" y1="0" x2="0" y2="1"><stop offset="0.00" stop-opacity="1.00"/><stop offset="0.17" stop-opacity="0.00"/><stop offset="0.33" stop-opacity="0.00"/><stop offset="0.50" stop-opacity="1.00"/><stop offset="0.67" stop-opacity="0.39"/><stop offset="0.83" stop-opacity="0.00"/><stop offset="1.00" stop-opacity="0.00"/></linearGradient></defs><rect x="9" y="0" width="1" height="209" fill="#1a097a"/><rect x="9" y="0" width="1" height="209" fill="url(#f4)"/><rect x="31" y="0" width="1" height="209" fill="#10064e"/><rect x="31" y="0" width="1" height="209" fill="url(#f5)"/><rect x="37" y="0" width="1" height="209" fill="#1f0b8f"/><rect x="37" y="0" width="1" height="209" fill="url(#f15)"/><rect x="39" y="0" width="1" height="209" fill="#18086f"/><rect x="39" y="0" width="1" height="209" fill="url(#f7)"/><rect x="41" y="0" width="1" height="209" fill="#1b097b"/><rect x="41" y="0" width="1" height="209" fill="url(#f2)"/><rect x="57" y="0" width="1" height="209" fill="#03010f"/><rect x="58" y="0" width="1" height="209" fill="#2f10c1"/><rect x="58" y="0" width="1" height="209" fill="url(#f7)"/><rect x="59" y="0" width="1" height="209" fill="#250da9"/><rect x="59" y="0" width="1" height="209" fill="url(#f4)"/><rect x="61" y="0" width="1" height="209" fill="#3311c9"/><rect x="61" y="0" width="1" height="209" fill="url(#f4)"/><rect x="62" y="0" width="1" height="209" fill="#070326"/><rect x="63" y="0" width="1" height="209" fill="#000000"/><rect x="64" y="0" width="1" height="209" fill="#260dac"/><rect x="64" y="0" width="1" height="209" fill="url(#f16)"/><rect x="65" y="0" width="1" height="209" fill="#130759"/><rect x="65" y="0" width="1" height="209" fill="url(#f11)"/><rect x="66" y="0" width="1" height="209" fill="#2a0eb8"/><rect x="66" y="0" width="1" height="209" fill="url(#f14)"/><rect x="68" y="0" width="1" height="209" fill="#070326"/><rect x="69" y="0" width="1" height="209" fill="#2f10c0"/><rect x="70" y="0" width="1" height="209" fill="#1b097e"/><rect x="70" y="0" width="1" height="209" fill="url(#f5)"/><rect x="71" y="0" width="1" height="209" fill="#3111c4"/><rect x="72" y="0" width="1" height="209" fill="#030110"/><rect x="74" y="0" width="1" height="209" fill="#02010e"/><rect x="76" y="0" width="1" height="209" fill="#3211c6"/><rect x="78" y="0" width="1" height="209" fill="#260dab"/><rect x="81" y="0" width="1" height="209" fill="#1c0a83"/><rect x="81" y="0" width="1" height="209" fill="url(#f16)"/><rect x="83" y="0" width="1" height="209" fill="#030111"/><rect x="85" y="0" width="1" height="209" fill="#040118"/><rect x="86" y="0" width="1" height="209" fill="#060222"/><rect x="87" y="0" width="1" height="209" fill="#02010d"/><rect x="89" y="0" width="1" height="209" fill="#040118"/><rect x="93" y="0" width="1" height="209" fill="#240ca6"/><rect x="93" y="0" width="1" height="209" fill="url(#f22)"/><rect x="94" y="0" width="1" height="209" fill="#070327"/><rect x="96" y="0" width="1" height="209" fill="#3010c4"/><rect x="96" y="0" width="1" height="209" fill="url(#f8)"/><rect x="97" y="0" width="1" height="209" fill="#4116e2"/><rect x="97" y="0" width="1" height="209" fill="url(#f16)"/><rect x="98" y="0" width="1" height="209" fill="#030113"/><rect x="99" y="0" width="1" height="209" fill="#2c0fbb"/><rect x="99" y="0" width="1" height="209" fill="url(#f5)"/><rect x="100" y="0" width="1" height="209" fill="#3612cf"/><rect x="100" y="0" width="1" height="209" fill="url(#f17)"/><rect x="101" y="0" width="1" height="209" fill="#220c9b"/><rect x="101" y="0" width="1" height="209" fill="url(#f9)"/><rect x="102" y="0" width="1" height="209" fill="#280eb5"/><rect x="102" y="0" width="1" height="209" fill="url(#f8)"/><rect x="103" y="0" width="1" height="209" fill="#05021a"/><rect x="104" y="0" width="1" height="209" fill="#3311c9"/><rect x="104" y="0" width="1" height="209" fill="url(#f2)"/><rect x="105" y="0" width="1" height="209" fill="#180871"/><rect x="105" y="0" width="1" height="209" fill="url(#f20)"/><rect x="106" y="0" width="1" height="209" fill="#1e0a8b"/><rect x="106" y="0" width="1" height="209" fill="url(#f16)"/><rect x="107" y="0" width="1" height="209" fill="#070225"/><rect x="110" y="0" width="1" height="209" fill="#220c9c"/><rect x="110" y="0" width="1" height="209" fill="url(#f22)"/><rect x="113" y="0" width="1" height="209" fill="#4e1aeb"/><rect x="113" y="0" width="1" height="209" fill="url(#f16)"/><rect x="115" y="0" width="1" height="209" fill="#1b097d"/><rect x="115" y="0" width="1" height="209" fill="url(#f22)"/><rect x="116" y="0" width="1" height="209" fill="#02010d"/><rect x="118" y="0" width="1" height="209" fill="#0a0433"/><rect x="118" y="0" width="1" height="209" fill="url(#f1)"/><rect x="121" y="0" width="1" height="209" fill="#3311c9"/><rect x="121" y="0" width="1" height="209" fill="url(#f17)"/><rect x="122" y="0" width="1" height="209" fill="#0b0438"/><rect x="122" y="0" width="1" height="209" fill="url(#f23)"/><rect x="123" y="0" width="1" height="209" fill="#02010e"/><rect x="124" y="0" width="1" height="209" fill="#260dad"/><rect x="124" y="0" width="1" height="209" fill="url(#f14)"/><rect x="125" y="0" width="1" height="209" fill="#1b097f"/><rect x="125" y="0" width="1" height="209" fill="url(#f15)"/><rect x="126" y="0" width="1" height="209" fill="#02010d"/><rect x="127" y="0" width="1" height="209" fill="#05021c"/><rect x="128" y="0" width="1" height="209" fill="#17086e"/><rect x="128" y="0" width="1" height="209" fill="url(#f4)"/><rect x="129" y="0" width="1" height="209" fill="#110652"/><rect x="129" y="0" width="1" height="209" fill="url(#f8)"/><rect x="130" y="0" width="1" height="209" fill="#030112"/><rect x="131" y="0" width="1" height="209" fill="#240ca3"/><rect x="131" y="0" width="1" height="209" fill="url(#f3)"/><rect x="133" y="0" width="1" height="209" fill="#190976"/><rect x="133" y="0" width="1" height="209" fill="url(#f15)"/><rect x="134" y="0" width="1" height="209" fill="#09032e"/><rect x="135" y="0" width="1" height="209" fill="#3311c8"/><rect x="135" y="0" width="1" height="209" fill="url(#f6)"/><rect x="137" y="0" width="1" height="209" fill="#511beb"/><rect x="137" y="0" width="1" height="209" fill="url(#f11)"/><rect x="138" y="0" width="1" height="209" fill="#3d15db"/><rect x="139" y="0" width="1" height="209" fill="#4417e7"/><rect x="139" y="0" width="1" height="209" fill="url(#f15)"/><rect x="140" y="0" width="1" height="209" fill="#150764"/><rect x="140" y="0" width="1" height="209" fill="url(#f15)"/><rect x="143" y="0" width="1" height="209" fill="#3713d0"/><rect x="143" y="0" width="1" height="209" fill="url(#f10)"/><rect x="144" y="0" width="1" height="209" fill="#070325"/><rect x="146" y="0" width="1" height="209" fill="#3612cf"/><rect x="146" y="0" width="1" height="209" fill="url(#f12)"/><rect x="147" y="0" width="1" height="209" fill="#2e10c0"/><rect x="149" y="0" width="1" height="209" fill="#220c9d"/><rect x="149" y="0" width="1" height="209" fill="url(#f21)"/><rect x="150" y="0" width="1" height="209" fill="#3813d2"/><rect x="150" y="0" width="1" height="209" fill="url(#f16)"/><rect x="151" y="0" width="1" height="209" fill="#220c9c"/><rect x="153" y="0" width="1" height="209" fill="#290eb7"/><rect x="154" y="0" width="1" height="209" fill="#02010e"/><rect x="156" y="0" width="1" height="209" fill="#070224"/><rect x="157" y="0" width="1" height="209" fill="#270db3"/><rect x="158" y="0" width="1" height="209" fill="#4517ea"/><rect x="158" y="0" width="1" height="209" fill="url(#f8)"/><rect x="159" y="0" width="1" height="209" fill="#6020ec"/><rect x="160" y="0" width="1" height="209" fill="#3211c7"/><rect x="160" y="0" width="1" height="209" fill="url(#f12)"/><rect x="161" y="0" width="1" height="209" fill="#2d0fbe"/><rect x="161" y="0" width="1" height="209" fill="url(#f2)"/><rect x="162" y="0" width="1" height="209" fill="#6422ed"/><rect x="162" y="0" width="1" height="209" fill="url(#f10)"/><rect x="164" y="0" width="1" height="209" fill="#2e10c0"/><rect x="164" y="0" width="1" height="209" fill="url(#f2)"/><rect x="165" y="0" width="1" height="209" fill="#2b0fba"/><rect x="165" y="0" width="1" height="209" fill="url(#f18)"/><rect x="166" y="0" width="1" height="209" fill="#3512cd"/><rect x="166" y="0" width="1" height="209" fill="url(#f13)"/><rect x="167" y="0" width="1" height="209" fill="#3b14d8"/><rect x="167" y="0" width="1" height="209" fill="url(#f1)"/><rect x="168" y="0" width="1" height="209" fill="#2e10bf"/><rect x="168" y="0" width="1" height="209" fill="url(#f11)"/><rect x="169" y="0" width="1" height="209" fill="#210b99"/><rect x="170" y="0" width="1" height="209" fill="#3b14d7"/><rect x="170" y="0" width="1" height="209" fill="url(#f7)"/><rect x="171" y="0" width="1" height="209" fill="#2f10c0"/><rect x="171" y="0" width="1" height="209" fill="url(#f0)"/><rect x="172" y="0" width="1" height="209" fill="#2b0fb9"/><rect x="172" y="0" width="1" height="209" fill="url(#f15)"/><rect x="174" y="0" width="1" height="209" fill="#6522ed"/><rect x="174" y="0" width="1" height="209" fill="url(#f14)"/><rect x="175" y="0" width="1" height="209" fill="#03010f"/><rect x="176" y="0" width="1" height="209" fill="#280eb4"/><rect x="176" y="0" width="1" height="209" fill="url(#f21)"/><rect x="177" y="0" width="1" height="209" fill="#531ceb"/><rect x="178" y="0" width="1" height="209" fill="#060221"/><rect x="179" y="0" width="1" height="209" fill="#220c9b"/><rect x="179" y="0" width="1" height="209" fill="url(#f18)"/><rect x="181" y="0" width="1" height="209" fill="#4718eb"/><rect x="181" y="0" width="1" height="209" fill="url(#f22)"/><rect x="182" y="0" width="1" height="209" fill="#4919eb"/><rect x="182" y="0" width="1" height="209" fill="url(#f9)"/><rect x="183" y="0" width="1" height="209" fill="#2a0eb9"/><rect x="183" y="0" width="1" height="209" fill="url(#f19)"/><rect x="184" y="0" width="1" height="209" fill="#3211c6"/><rect x="184" y="0" width="1" height="209" fill="url(#f14)"/><rect x="185" y="0" width="1" height="209" fill="#2c0fbc"/><rect x="185" y="0" width="1" height="209" fill="url(#f16)"/><rect x="186" y="0" width="1" height="209" fill="#6522ed"/><rect x="186" y="0" width="1" height="209" fill="url(#f13)"/><rect x="187" y="0" width="1" height="209" fill="#3a14d5"/><rect x="187" y="0" width="1" height="209" fill="url(#f21)"/><rect x="188" y="0" width="1" height="209" fill="#3f15df"/><rect x="188" y="0" width="1" height="209" fill="url(#f7)"/><rect x="189" y="0" width="1" height="209" fill="#4e1beb"/><rect x="189" y="0" width="1" height="209" fill="url(#f10)"/><rect x="190" y="0" width="1" height="209" fill="#3512cc"/><rect x="190" y="0" width="1" height="209" fill="url(#f12)"/><rect x="191" y="0" width="1" height="209" fill="#4517ea"/><rect x="191" y="0" width="1" height="209" fill="url(#f6)"/><rect x="192" y="0" width="1" height="209" fill="#1f0b8f"/><rect x="192" y="0" width="1" height="209" fill="url(#f6)"/><rect x="193" y="0" width="1" height="209" fill="#4216e3"/><rect x="193" y="0" width="1" height="209" fill="url(#f19)"/><rect x="194" y="0" width="1" height="209" fill="#6522ed"/><rect x="194" y="0" width="1" height="209" fill="url(#f7)"/><rect x="195" y="0" width="1" height="209" fill="#4116e3"/><rect x="195" y="0" width="1" height="209" fill="url(#f12)"/><rect x="196" y="0" width="1" height="209" fill="#3813d1"/><rect x="196" y="0" width="1" height="209" fill="url(#f19)"/><rect x="197" y="0" width="1" height="209" fill="#c843e2"/><rect x="198" y="0" width="1" height="209" fill="#bd3fe5"/><rect x="199" y="0" width="1" height="209" fill="#e859b7"/><rect x="200" y="0" width="1" height="209" fill="#7829ee"/><rect x="201" y="0" width="1" height="209" fill="#a939e9"/><rect x="202" y="0" width="1" height="209" fill="#d84bd5"/><rect x="203" y="0" width="1" height="209" fill="#f262a3"/><rect x="204" y="0" width="1" height="209" fill="#d246e0"/><rect x="205" y="0" width="1" height="209" fill="#b33ce7"/><rect x="206" y="0" width="1" height="209" fill="#dc4ece"/><rect x="207" y="0" width="1" height="209" fill="#7127ee"/><rect x="208" y="0" width="1" height="209" fill="#f87a7b"/><rect x="209" y="0" width="1" height="209" fill="#d94cd3"/><rect x="210" y="0" width="1" height="209" fill="#ee5eac"/><rect x="211" y="0" width="1" height="209" fill="#c943e2"/><rect x="212" y="0" width="1" height="209" fill="#db4ece"/><rect x="213" y="0" width="1" height="209" fill="#eb5bb2"/><rect x="214" y="0" width="1" height="209" fill="#d347de"/><rect x="215" y="0" width="1" height="209" fill="#f66b92"/><rect x="216" y="0" width="1" height="209" fill="#e758b9"/><rect x="217" y="0" width="1" height="209" fill="#eb5cb1"/><rect x="218" y="0" width="1" height="209" fill="#e859b6"/><rect x="219" y="0" width="1" height="209" fill="#e758b9"/><rect x="220" y="0" width="1" height="209" fill="#fa826e"/><rect x="221" y="0" width="1" height="209" fill="#e355c0"/><rect x="222" y="0" width="1" height="209" fill="#fa826e"/><rect x="223" y="0" width="1" height="209" fill="#ec5daf"/><rect x="224" y="0" width="1" height="209" fill="#db4dcf"/><rect x="225" y="0" width="1" height="209" fill="#f5679a"/><rect x="226" y="0" width="1" height="209" fill="#9a34ec"/><rect x="227" y="0" width="1" height="209" fill="#f97d75"/><rect x="228" y="0" width="1" height="209" fill="#f66b92"/><rect x="229" y="0" width="1" height="209" fill="#fa826e"/><rect x="230" y="0" width="1" height="209" fill="#f261a4"/><rect x="231" y="0" width="1" height="209" fill="#9d35ec"/><rect x="232" y="0" width="1" height="209" fill="#f66c91"/><rect x="233" y="0" width="1" height="209" fill="#f5659d"/><rect x="234" y="0" width="1" height="209" fill="#b43ce7"/><rect x="235" y="0" width="1" height="209" fill="#ec5caf"/><rect x="236" y="0" width="1" height="209" fill="#f97d75"/><rect x="237" y="0" width="1" height="209" fill="#f87681"/><rect x="238" y="0" width="1" height="209" fill="#f66c91"/><rect x="239" y="0" width="1" height="209" fill="#f56898"/><rect x="240" y="0" width="1" height="209" fill="#f362a3"/><rect x="241" y="0" width="1" height="209" fill="#fa826e"/><rect x="242" y="0" width="1" height="209" fill="#e455bf"/><rect x="243" y="0" width="1" height="209" fill="#f463a0"/><rect x="244" y="0" width="1" height="209" fill="#ed5dae"/><rect x="245" y="0" width="1" height="209" fill="#ce44e1"/><rect x="246" y="0" width="1" height="209" fill="#e859b6"/><rect x="247" y="0" width="1" height="209" fill="#c040e4"/><rect x="248" y="0" width="1" height="209" fill="#9131ee"/><rect x="249" y="0" width="1" height="209" fill="#f77288"/><rect x="250" y="0" width="1" height="209" fill="#f66e8f"/><rect x="251" y="0" width="1" height="209" fill="#9733ed"/><rect x="252" y="0" width="1" height="209" fill="#f5659e"/><rect x="253" y="0" width="1" height="209" fill="#d246e0"/><rect x="254" y="0" width="1" height="209" fill="#e052c5"/><rect x="255" y="0" width="1" height="209" fill="#af3be8"/><rect x="256" y="0" width="1" height="209" fill="#e657ba"/><rect x="257" y="0" width="1" height="209" fill="#d045e1"/><rect x="258" y="0" width="1" height="209" fill="#f66d8f"/><rect x="259" y="0" width="1" height="209" fill="#e354c1"/><rect x="260" y="0" width="1" height="209" fill="#db4ecf"/><rect x="261" y="0" width="1" height="209" fill="#c943e2"/><rect x="262" y="0" width="1" height="209" fill="#b03be8"/><rect x="263" y="0" width="1" height="209" fill="#6522ed"/><rect x="263" y="0" width="1" height="209" fill="url(#f2)"/><rect x="264" y="0" width="1" height="209" fill="#6522ed"/><rect x="265" y="0" width="1" height="209" fill="#3512cc"/><rect x="266" y="0" width="1" height="209" fill="#6522ed"/><rect x="266" y="0" width="1" height="209" fill="url(#f19)"/><rect x="267" y="0" width="1" height="209" fill="#5d1fec"/><rect x="267" y="0" width="1" height="209" fill="url(#f8)"/><rect x="268" y="0" width="1" height="209" fill="#3d15da"/><rect x="268" y="0" width="1" height="209" fill="url(#f6)"/><rect x="269" y="0" width="1" height="209" fill="#4216e4"/><rect x="269" y="0" width="1" height="209" fill="url(#f19)"/><rect x="270" y="0" width="1" height="209" fill="#230c9f"/><rect x="270" y="0" width="1" height="209" fill="url(#f15)"/><rect x="271" y="0" width="1" height="209" fill="#4216e4"/><rect x="271" y="0" width="1" height="209" fill="url(#f17)"/><rect x="272" y="0" width="1" height="209" fill="#3c14d9"/><rect x="272" y="0" width="1" height="209" fill="url(#f20)"/><rect x="273" y="0" width="1" height="209" fill="#2f10c2"/><rect x="273" y="0" width="1" height="209" fill="url(#f9)"/><rect x="274" y="0" width="1" height="209" fill="#220c9c"/><rect x="274" y="0" width="1" height="209" fill="url(#f23)"/><rect x="275" y="0" width="1" height="209" fill="#280eb4"/><rect x="277" y="0" width="1" height="209" fill="#571dec"/><rect x="277" y="0" width="1" height="209" fill="url(#f6)"/><rect x="279" y="0" width="1" height="209" fill="#3f15df"/><rect x="279" y="0" width="1" height="209" fill="url(#f11)"/><rect x="280" y="0" width="1" height="209" fill="#3e15dd"/><rect x="280" y="0" width="1" height="209" fill="url(#f0)"/><rect x="281" y="0" width="1" height="209" fill="#6522ed"/><rect x="281" y="0" width="1" height="209" fill="url(#f18)"/><rect x="282" y="0" width="1" height="209" fill="#6522ed"/><rect x="282" y="0" width="1" height="209" fill="url(#f16)"/><rect x="283" y="0" width="1" height="209" fill="#2f10c2"/><rect x="283" y="0" width="1" height="209" fill="url(#f2)"/><rect x="284" y="0" width="1" height="209" fill="#4317e6"/><rect x="284" y="0" width="1" height="209" fill="url(#f6)"/><rect x="285" y="0" width="1" height="209" fill="#3512cd"/><rect x="286" y="0" width="1" height="209" fill="#2b0fbb"/><rect x="286" y="0" width="1" height="209" fill="url(#f20)"/><rect x="287" y="0" width="1" height="209" fill="#5d20ec"/><rect x="288" y="0" width="1" height="209" fill="#210b97"/><rect x="289" y="0" width="1" height="209" fill="#120657"/><rect x="290" y="0" width="1" height="209" fill="#591eec"/><rect x="290" y="0" width="1" height="209" fill="url(#f12)"/><rect x="291" y="0" width="1" height="209" fill="#040116"/><rect x="292" y="0" width="1" height="209" fill="#6522ed"/><rect x="292" y="0" width="1" height="209" fill="url(#f17)"/><rect x="294" y="0" width="1" height="209" fill="#290eb7"/><rect x="294" y="0" width="1" height="209" fill="url(#f12)"/><rect x="295" y="0" width="1" height="209" fill="#17086c"/><rect x="295" y="0" width="1" height="209" fill="url(#f13)"/><rect x="296" y="0" width="1" height="209" fill="#270db2"/><rect x="296" y="0" width="1" height="209" fill="url(#f12)"/><rect x="297" y="0" width="1" height="209" fill="#1d0a85"/><rect x="297" y="0" width="1" height="209" fill="url(#f19)"/><rect x="299" y="0" width="1" height="209" fill="#3a14d5"/><rect x="299" y="0" width="1" height="209" fill="url(#f14)"/><rect x="301" y="0" width="1" height="209" fill="#4818eb"/><rect x="301" y="0" width="1" height="209" fill="url(#f14)"/><rect x="302" y="0" width="1" height="209" fill="#3b14d7"/><rect x="302" y="0" width="1" height="209" fill="url(#f1)"/><rect x="303" y="0" width="1" height="209" fill="#6522ed"/><rect x="304" y="0" width="1" height="209" fill="#4517e9"/><rect x="304" y="0" width="1" height="209" fill="url(#f16)"/><rect x="306" y="0" width="1" height="209" fill="#02010e"/><rect x="307" y="0" width="1" height="209" fill="#2d0fbe"/><rect x="307" y="0" width="1" height="209" fill="url(#f15)"/><rect x="308" y="0" width="1" height="209" fill="#270db1"/><rect x="310" y="0" width="1" height="209" fill="#070223"/><rect x="311" y="0" width="1" height="209" fill="#3111c5"/><rect x="311" y="0" width="1" height="209" fill="url(#f14)"/><rect x="312" y="0" width="1" height="209" fill="#4919eb"/><rect x="312" y="0" width="1" height="209" fill="url(#f15)"/><rect x="313" y="0" width="1" height="209" fill="#2f10c2"/><rect x="313" y="0" width="1" height="209" fill="url(#f1)"/><rect x="314" y="0" width="1" height="209" fill="#6021ec"/><rect x="314" y="0" width="1" height="209" fill="url(#f20)"/><rect x="316" y="0" width="1" height="209" fill="#060222"/><rect x="317" y="0" width="1" height="209" fill="#160867"/><rect x="317" y="0" width="1" height="209" fill="url(#f14)"/><rect x="318" y="0" width="1" height="209" fill="#2b0fba"/><rect x="318" y="0" width="1" height="209" fill="url(#f3)"/><rect x="319" y="0" width="1" height="209" fill="#0c043e"/><rect x="319" y="0" width="1" height="209" fill="url(#f11)"/><rect x="320" y="0" width="1" height="209" fill="#270db2"/><rect x="321" y="0" width="1" height="209" fill="#1b097f"/><rect x="321" y="0" width="1" height="209" fill="url(#f5)"/><rect x="322" y="0" width="1" height="209" fill="#6522ed"/><rect x="323" y="0" width="1" height="209" fill="#200b91"/><rect x="326" y="0" width="1" height="209" fill="#040114"/><rect x="327" y="0" width="1" height="209" fill="#2f10c2"/><rect x="327" y="0" width="1" height="209" fill="url(#f11)"/><rect x="328" y="0" width="1" height="209" fill="#030112"/><rect x="329" y="0" width="1" height="209" fill="#3311c9"/><rect x="329" y="0" width="1" height="209" fill="url(#f3)"/><rect x="330" y="0" width="1" height="209" fill="#3211c6"/><rect x="330" y="0" width="1" height="209" fill="url(#f13)"/><rect x="331" y="0" width="1" height="209" fill="#250da7"/><rect x="331" y="0" width="1" height="209" fill="url(#f15)"/><rect x="332" y="0" width="1" height="209" fill="#290eb6"/><rect x="332" y="0" width="1" height="209" fill="url(#f7)"/><rect x="333" y="0" width="1" height="209" fill="#290eb7"/><rect x="333" y="0" width="1" height="209" fill="url(#f21)"/><rect x="335" y="0" width="1" height="209" fill="#3412cb"/><rect x="335" y="0" width="1" height="209" fill="url(#f20)"/><rect x="337" y="0" width="1" height="209" fill="#190977"/><rect x="337" y="0" width="1" height="209" fill="url(#f15)"/><rect x="338" y="0" width="1" height="209" fill="#230ca2"/><rect x="339" y="0" width="1" height="209" fill="#1d0a86"/><rect x="339" y="0" width="1" height="209" fill="url(#f1)"/><rect x="340" y="0" width="1" height="209" fill="#05021d"/><rect x="341" y="0" width="1" height="209" fill="#2d0fbd"/><rect x="341" y="0" width="1" height="209" fill="url(#f13)"/><rect x="342" y="0" width="1" height="209" fill="#1e0a8c"/><rect x="342" y="0" width="1" height="209" fill="url(#f19)"/><rect x="343" y="0" width="1" height="209" fill="#220c9a"/><rect x="343" y="0" width="1" height="209" fill="url(#f9)"/><rect x="344" y="0" width="1" height="209" fill="#6522ed"/><rect x="344" y="0" width="1" height="209" fill="url(#f17)"/><rect x="345" y="0" width="1" height="209" fill="#3010c3"/><rect x="348" y="0" width="1" height="209" fill="#3f15df"/><rect x="348" y="0" width="1" height="209" fill="url(#f10)"/><rect x="350" y="0" width="1" height="209" fill="#02010d"/><rect x="351" y="0" width="1" height="209" fill="#3c14d9"/><rect x="351" y="0" width="1" height="209" fill="url(#f21)"/><rect x="353" y="0" width="1" height="209" fill="#120655"/><rect x="353" y="0" width="1" height="209" fill="url(#f16)"/><rect x="354" y="0" width="1" height="209" fill="#0b0437"/><rect x="354" y="0" width="1" height="209" fill="url(#f7)"/><rect x="355" y="0" width="1" height="209" fill="#030110"/><rect x="356" y="0" width="1" height="209" fill="#040117"/><rect x="357" y="0" width="1" height="209" fill="#150765"/><rect x="359" y="0" width="1" height="209" fill="#6522ed"/><rect x="359" y="0" width="1" height="209" fill="url(#f16)"/><rect x="360" y="0" width="1" height="209" fill="#4216e3"/><rect x="360" y="0" width="1" height="209" fill="url(#f18)"/><rect x="362" y="0" width="1" height="209" fill="#200b93"/><rect x="362" y="0" width="1" height="209" fill="url(#f18)"/><rect x="363" y="0" width="1" height="209" fill="#02010d"/><rect x="364" y="0" width="1" height="209" fill="#4517ea"/><rect x="364" y="0" width="1" height="209" fill="url(#f0)"/><rect x="365" y="0" width="1" height="209" fill="#280eb4"/><rect x="365" y="0" width="1" height="209" fill="url(#f20)"/><rect x="366" y="0" width="1" height="209" fill="#250daa"/><rect x="366" y="0" width="1" height="209" fill="url(#f18)"/><rect x="367" y="0" width="1" height="209" fill="#070326"/><rect x="368" y="0" width="1" height="209" fill="#13075c"/><rect x="368" y="0" width="1" height="209" fill="url(#f22)"/><rect x="369" y="0" width="1" height="209" fill="#030112"/><rect x="370" y="0" width="1" height="209" fill="#6522ed"/><rect x="371" y="0" width="1" height="209" fill="#3b14d8"/><rect x="372" y="0" width="1" height="209" fill="#2f10c1"/><rect x="372" y="0" width="1" height="209" fill="url(#f20)"/><rect x="373" y="0" width="1" height="209" fill="#3c14d9"/><rect x="373" y="0" width="1" height="209" fill="url(#f13)"/><rect x="374" y="0" width="1" height="209" fill="#160869"/><rect x="374" y="0" width="1" height="209" fill="url(#f11)"/><rect x="376" y="0" width="1" height="209" fill="#6522ed"/><rect x="376" y="0" width="1" height="209" fill="url(#f9)"/><rect x="377" y="0" width="1" height="209" fill="#531ceb"/><rect x="377" y="0" width="1" height="209" fill="url(#f3)"/><rect x="378" y="0" width="1" height="209" fill="#3612cf"/><rect x="378" y="0" width="1" height="209" fill="url(#f17)"/><rect x="379" y="0" width="1" height="209" fill="#280eb4"/><rect x="379" y="0" width="1" height="209" fill="url(#f9)"/><rect x="380" y="0" width="1" height="209" fill="#0e0545"/><rect x="380" y="0" width="1" height="209" fill="url(#f6)"/><rect x="381" y="0" width="1" height="209" fill="#3211c6"/><rect x="381" y="0" width="1" height="209" fill="url(#f3)"/><rect x="382" y="0" width="1" height="209" fill="#2a0eb7"/><rect x="383" y="0" width="1" height="209" fill="#1e0a8c"/><rect x="384" y="0" width="1" height="209" fill="#3211c7"/><rect x="385" y="0" width="1" height="209" fill="#3010c4"/><rect x="385" y="0" width="1" height="209" fill="url(#f3)"/><rect x="387" y="0" width="1" height="209" fill="#6322ed"/><rect x="388" y="0" width="1" height="209" fill="#040115"/><rect x="389" y="0" width="1" height="209" fill="#6522ed"/><rect x="389" y="0" width="1" height="209" fill="url(#f13)"/><rect x="390" y="0" width="1" height="209" fill="#030112"/><rect x="391" y="0" width="1" height="209" fill="#160866"/><rect x="393" y="0" width="1" height="209" fill="#050219"/><rect x="396" y="0" width="1" height="209" fill="#220c9d"/><rect x="398" y="0" width="1" height="209" fill="#3512cc"/><rect x="398" y="0" width="1" height="209" fill="url(#f8)"/><rect x="399" y="0" width="1" height="209" fill="#050219"/><rect x="400" y="0" width="1" height="209" fill="#030111"/><rect x="401" y="0" width="1" height="209" fill="#1d0a84"/><rect x="401" y="0" width="1" height="209" fill="url(#f4)"/><rect x="404" y="0" width="1" height="209" fill="#080328"/><rect x="405" y="0" width="1" height="209" fill="#6522ed"/><rect x="405" y="0" width="1" height="209" fill="url(#f21)"/><rect x="406" y="0" width="1" height="209" fill="#160867"/><rect x="406" y="0" width="1" height="209" fill="url(#f4)"/><rect x="408" y="0" width="1" height="209" fill="#3412ca"/><rect x="408" y="0" width="1" height="209" fill="url(#f6)"/><rect x="410" y="0" width="1" height="209" fill="#551dec"/><rect x="411" y="0" width="1" height="209" fill="#3412cb"/><rect x="411" y="0" width="1" height="209" fill="url(#f0)"/><rect x="412" y="0" width="1" height="209" fill="#6522ed"/><rect x="412" y="0" width="1" height="209" fill="url(#f12)"/><rect x="413" y="0" width="1" height="209" fill="#2a0eb8"/><rect x="413" y="0" width="1" height="209" fill="url(#f18)"/><rect x="415" y="0" width="1" height="209" fill="#6522ed"/><rect x="415" y="0" width="1" height="209" fill="url(#f20)"/><rect x="418" y="0" width="1" height="209" fill="#1d0a86"/><rect x="418" y="0" width="1" height="209" fill="url(#f13)"/><rect x="419" y="0" width="1" height="209" fill="#511ceb"/><rect x="419" y="0" width="1" height="209" fill="url(#f22)"/><rect x="420" y="0" width="1" height="209" fill="#040118"/><rect x="421" y="0" width="1" height="209" fill="#190975"/><rect x="421" y="0" width="1" height="209" fill="url(#f5)"/><rect x="423" y="0" width="1" height="209" fill="#1a0978"/><rect x="424" y="0" width="1" height="209" fill="#030113"/><rect x="425" y="0" width="1" height="209" fill="#1d0a88"/><rect x="425" y="0" width="1" height="209" fill="url(#f11)"/><rect x="426" y="0" width="1" height="209" fill="#040115"/><rect x="426" y="0" width="1" height="209" fill="url(#f17)"/><rect x="427" y="0" width="1" height="209" fill="#240ca4"/><rect x="428" y="0" width="1" height="209" fill="#280eb5"/><rect x="428" y="0" width="1" height="209" fill="url(#f23)"/><rect x="429" y="0" width="1" height="209" fill="#06021f"/><rect x="430" y="0" width="1" height="209" fill="#290eb5"/><rect x="431" y="0" width="1" height="209" fill="#1e0a88"/><rect x="431" y="0" width="1" height="209" fill="url(#f8)"/><rect x="432" y="0" width="1" height="209" fill="#3111c5"/><rect x="434" y="0" width="1" height="209" fill="#040114"/><rect x="435" y="0" width="1" height="209" fill="#2b0fbb"/><rect x="438" y="0" width="1" height="209" fill="#3010c4"/><rect x="439" y="0" width="1" height="209" fill="#240ca6"/><rect x="439" y="0" width="1" height="209" fill="url(#f23)"/><rect x="440" y="0" width="1" height="209" fill="#3f15df"/><rect x="440" y="0" width="1" height="209" fill="url(#f13)"/><rect x="441" y="0" width="1" height="209" fill="#230ca2"/><rect x="441" y="0" width="1" height="209" fill="url(#f17)"/><rect x="443" y="0" width="1" height="209" fill="#2b0fbb"/><rect x="443" y="0" width="1" height="209" fill="url(#f21)"/><rect x="444" y="0" width="1" height="209" fill="#1a0978"/><rect x="444" y="0" width="1" height="209" fill="url(#f5)"/><rect x="445" y="0" width="1" height="209" fill="#3713d1"/><rect x="445" y="0" width="1" height="209" fill="url(#f20)"/><rect x="446" y="0" width="1" height="209" fill="#09032d"/><rect x="446" y="0" width="1" height="209" fill="url(#f13)"/><rect x="447" y="0" width="1" height="209" fill="#070225"/><rect x="448" y="0" width="1" height="209" fill="#210b98"/><rect x="448" y="0" width="1" height="209" fill="url(#f18)"/><rect x="450" y="0" width="1" height="209" fill="#4016e0"/><rect x="451" y="0" width="1" height="209" fill="#02010c"/><rect x="453" y="0" width="1" height="209" fill="#3311c9"/><rect x="453" y="0" width="1" height="209" fill="url(#f14)"/><rect x="454" y="0" width="1" height="209" fill="#3010c3"/><rect x="454" y="0" width="1" height="209" fill="url(#f12)"/><rect x="455" y="0" width="1" height="209" fill="#070225"/><rect x="459" y="0" width="1" height="209" fill="#1f0b8f"/><rect x="459" y="0" width="1" height="209" fill="url(#f14)"/><rect x="460" y="0" width="1" height="209" fill="#03010f"/><rect x="461" y="0" width="1" height="209" fill="#110652"/><rect x="462" y="0" width="1" height="209" fill="#120658"/><rect x="463" y="0" width="1" height="209" fill="#030111"/><rect x="465" y="0" width="1" height="209" fill="#1d0a84"/><rect x="465" y="0" width="1" height="209" fill="url(#f22)"/><rect x="469" y="0" width="1" height="209" fill="#120658"/><rect x="469" y="0" width="1" height="209" fill="url(#f19)"/><rect x="470" y="0" width="1" height="209" fill="#0f054b"/><rect x="470" y="0" width="1" height="209" fill="url(#f10)"/><rect x="471" y="0" width="1" height="209" fill="#050219"/><rect x="472" y="0" width="1" height="209" fill="#030112"/><rect x="473" y="0" width="1" height="209" fill="#03010f"/><rect x="476" y="0" width="1" height="209" fill="#040115"/><rect x="477" y="0" width="1" height="209" fill="#3813d1"/><rect x="477" y="0" width="1" height="209" fill="url(#f15)"/><rect x="479" y="0" width="1" height="209" fill="#2a0eb9"/><rect x="479" y="0" width="1" height="209" fill="url(#f6)"/><rect x="481" y="0" width="1" height="209" fill="#1e0a89"/><rect x="481" y="0" width="1" height="209" fill="url(#f20)"/><rect x="482" y="0" width="1" height="209" fill="#3813d1"/><rect x="485" y="0" width="1" height="209" fill="#02010d"/><rect x="487" y="0" width="1" height="209" fill="#05021a"/><rect x="489" y="0" width="1" height="209" fill="#17086b"/><rect x="490" y="0" width="1" height="209" fill="#0a0434"/><rect x="490" y="0" width="1" height="209" fill="url(#f20)"/><rect x="492" y="0" width="1" height="209" fill="#270db0"/><rect x="496" y="0" width="1" height="209" fill="#2a0eb8"/><rect x="496" y="0" width="1" height="209" fill="url(#f13)"/><rect x="497" y="0" width="1" height="209" fill="#4517e9"/><rect x="497" y="0" width="1" height="209" fill="url(#f1)"/><rect x="501" y="0" width="1" height="209" fill="#06021f"/><rect x="503" y="0" width="1" height="209" fill="#060221"/><rect x="504" y="0" width="1" height="209" fill="#050219"/><rect x="506" y="0" width="1" height="209" fill="#06021e"/><rect x="508" y="0" width="1" height="209" fill="#270db3"/><rect x="508" y="0" width="1" height="209" fill="url(#f15)"/><rect x="509" y="0" width="1" height="209" fill="#f8a088"/><rect x="508" y="0" width="1" height="209" fill="#a04868"/><rect x="510" y="0" width="1" height="209" fill="#220c9b"/><rect x="510" y="0" width="1" height="209" fill="url(#f5)"/><rect x="515" y="0" width="1" height="209" fill="#17086d"/><rect x="522" y="0" width="1" height="209" fill="#2c0fbb"/><rect x="535" y="0" width="1" height="209" fill="#260dac"/><rect x="536" y="0" width="1" height="209" fill="#3111c5"/><rect x="550" y="0" width="1" height="209" fill="#210b99"/><rect x="550" y="0" width="1" height="209" fill="url(#f9)"/><rect x="557" y="0" width="1" height="209" fill="#0a0435"/><rect x="557" y="0" width="1" height="209" fill="url(#f8)"/><rect x="562" y="0" width="1" height="209" fill="#2f10c0"/><rect x="572" y="0" width="1" height="209" fill="#08032c"/><rect x="572" y="0" width="1" height="209" fill="url(#f23)"/><rect x="574" y="0" width="1" height="209" fill="#1a0978"/><rect x="574" y="0" width="1" height="209" fill="url(#f21)"/><rect x="579" y="0" width="1" height="209" fill="#14075e"/><rect x="579" y="0" width="1" height="209" fill="url(#f11)"/><rect x="581" y="0" width="1" height="209" fill="#3713d0"/><rect x="581" y="0" width="1" height="209" fill="url(#f8)"/><rect x="586" y="0" width="1" height="209" fill="#290eb6"/><rect x="586" y="0" width="1" height="209" fill="url(#f11)"/><rect x="597" y="0" width="1" height="209" fill="#3211c6"/><rect x="597" y="0" width="1" height="209" fill="url(#f0)"/><rect x="600" y="0" width="1" height="209" fill="#6522ed"/><rect x="611" y="0" width="1" height="209" fill="#3311c8"/><rect x="611" y="0" width="1" height="209" fill="url(#f5)"/><rect x="613" y="0" width="1" height="209" fill="#3a14d5"/><rect x="613" y="0" width="1" height="209" fill="url(#f15)"/><rect x="616" y="0" width="1" height="209" fill="#290eb5"/><rect x="616" y="0" width="1" height="209" fill="url(#f12)"/><rect x="619" y="0" width="1" height="209" fill="#1f0b8f"/><rect x="619" y="0" width="1" height="209" fill="url(#f21)"/><rect x="621" y="0" width="1" height="209" fill="#3311c9"/><rect x="623" y="0" width="1" height="209" fill="#220c9e"/><rect x="625" y="0" width="1" height="209" fill="#1a0977"/><rect x="625" y="0" width="1" height="209" fill="url(#f0)"/><rect x="627" y="0" width="1" height="209" fill="#2c0fbc"/><rect x="627" y="0" width="1" height="209" fill="url(#f15)"/><rect x="628" y="0" width="1" height="209" fill="#090331"/><rect x="628" y="0" width="1" height="209" fill="url(#f0)"/><rect x="634" y="0" width="1" height="209" fill="#1e0a8c"/><rect x="634" y="0" width="1" height="209" fill="url(#f15)"/><rect x="643" y="0" width="1" height="209" fill="#3412ca"/><rect x="644" y="0" width="1" height="209" fill="#18086f"/><rect x="644" y="0" width="1" height="209" fill="url(#f14)"/><rect x="647" y="0" width="1" height="209" fill="#220c9a"/><rect x="647" y="0" width="1" height="209" fill="url(#f2)"/><rect x="648" y="0" width="1" height="209" fill="#1c0a80"/><rect x="648" y="0" width="1" height="209" fill="url(#f20)"/><rect x="649" y="0" width="1" height="209" fill="#6522ed"/><rect x="649" y="0" width="1" height="209" fill="url(#f23)"/><rect x="650" y="0" width="1" height="209" fill="#290eb6"/><rect x="650" y="0" width="1" height="209" fill="url(#f4)"/><rect x="651" y="0" width="1" height="209" fill="#17086d"/><rect x="651" y="0" width="1" height="209" fill="url(#f4)"/><rect x="652" y="0" width="1" height="209" fill="#200b92"/><rect x="653" y="0" width="1" height="209" fill="#270db1"/><rect x="653" y="0" width="1" height="209" fill="url(#f14)"/><rect x="655" y="0" width="1" height="209" fill="#3813d1"/><rect x="656" y="0" width="1" height="209" fill="#591eec"/><rect x="657" y="0" width="1" height="209" fill="#4116e2"/><rect x="658" y="0" width="1" height="209" fill="#6221ed"/><rect x="659" y="0" width="1" height="209" fill="#3111c4"/><rect x="660" y="0" width="1" height="209" fill="#c040e4"/><rect x="661" y="0" width="1" height="209" fill="#7d2bee"/><rect x="662" y="0" width="1" height="209" fill="#7628ee"/><rect x="663" y="0" width="1" height="209" fill="#5d1fec"/><rect x="664" y="0" width="1" height="209" fill="#4317e7"/><rect x="665" y="0" width="1" height="209" fill="#7427ee"/><rect x="666" y="0" width="1" height="209" fill="#4417e8"/><rect x="667" y="0" width="1" height="209" fill="#852def"/><rect x="668" y="0" width="1" height="209" fill="#4317e6"/><rect x="669" y="0" width="1" height="209" fill="#8a2fef"/><rect x="670" y="0" width="1" height="209" fill="#6221ed"/><rect x="671" y="0" width="1" height="209" fill="#9533ed"/><rect x="672" y="0" width="1" height="209" fill="#ba3ee5"/><rect x="673" y="0" width="1" height="209" fill="#8e30ef"/><rect x="674" y="0" width="1" height="209" fill="#8a2fef"/><rect x="675" y="0" width="1" height="209" fill="#812cef"/><rect x="676" y="0" width="1" height="209" fill="#a537ea"/><rect x="677" y="0" width="1" height="209" fill="#a236eb"/><rect x="678" y="0" width="1" height="209" fill="#5b1fec"/><rect x="679" y="0" width="1" height="209" fill="#9131ee"/><rect x="680" y="0" width="1" height="209" fill="#6d25ed"/><rect x="681" y="0" width="1" height="209" fill="#aa39e9"/><rect x="682" y="0" width="1" height="209" fill="#7c2aee"/><rect x="683" y="0" width="1" height="209" fill="#9c35ec"/><rect x="684" y="0" width="1" height="209" fill="#a638ea"/><rect x="685" y="0" width="1" height="209" fill="#bf40e5"/><rect x="686" y="0" width="1" height="209" fill="#9332ee"/><rect x="687" y="0" width="1" height="209" fill="#9c35ec"/><rect x="688" y="0" width="1" height="209" fill="#c040e4"/><rect x="689" y="0" width="1" height="209" fill="#d94cd3"/><rect x="690" y="0" width="1" height="209" fill="#b03be8"/><rect x="691" y="0" width="1" height="209" fill="#d74bd6"/><rect x="692" y="0" width="1" height="209" fill="#d649d9"/><rect x="693" y="0" width="1" height="209" fill="#9131ee"/><rect x="694" y="0" width="1" height="209" fill="#db4ecf"/><rect x="695" y="0" width="1" height="209" fill="#e355bf"/><rect x="696" y="0" width="1" height="209" fill="#c542e3"/><rect x="697" y="0" width="1" height="209" fill="#6f26ed"/><rect x="698" y="0" width="1" height="209" fill="#9c35ec"/><rect x="699" y="0" width="1" height="209" fill="#b93ee6"/><rect x="700" y="0" width="1" height="209" fill="#9332ee"/><rect x="701" y="0" width="1" height="209" fill="#9532ee"/><rect x="702" y="0" width="1" height="209" fill="#d74ad6"/><rect x="703" y="0" width="1" height="209" fill="#842def"/><rect x="704" y="0" width="1" height="209" fill="#6d25ed"/><rect x="705" y="0" width="1" height="209" fill="#551dec"/><rect x="706" y="0" width="1" height="209" fill="#6823ed"/><rect x="707" y="0" width="1" height="209" fill="#ab39e9"/><rect x="708" y="0" width="1" height="209" fill="#4618eb"/><rect x="709" y="0" width="1" height="209" fill="#4417e8"/><rect x="710" y="0" width="1" height="209" fill="#7528ee"/><rect x="711" y="0" width="1" height="209" fill="#5b1fec"/><rect x="712" y="0" width="1" height="209" fill="#7a2aee"/><rect x="713" y="0" width="1" height="209" fill="#8d30ef"/><rect x="714" y="0" width="1" height="209" fill="#9533ed"/><rect x="715" y="0" width="1" height="209" fill="#9532ed"/><rect x="716" y="0" width="1" height="209" fill="#3211c6"/><rect x="717" y="0" width="1" height="209" fill="#7f2bef"/><rect x="718" y="0" width="1" height="209" fill="#4016e0"/><rect x="719" y="0" width="1" height="209" fill="#6623ed"/><rect x="720" y="0" width="1" height="209" fill="#4116e2"/><rect x="721" y="0" width="1" height="209" fill="#290eb6"/><rect x="726" y="0" width="1" height="209" fill="#4818eb"/><rect x="726" y="0" width="1" height="209" fill="url(#f21)"/><rect x="728" y="0" width="1" height="209" fill="#14075f"/><rect x="728" y="0" width="1" height="209" fill="url(#f16)"/><rect x="729" y="0" width="1" height="209" fill="#3b14d8"/><rect x="729" y="0" width="1" height="209" fill="url(#f6)"/><rect x="730" y="0" width="1" height="209" fill="#3913d3"/><rect x="737" y="0" width="1" height="209" fill="#2d0fbe"/><rect x="737" y="0" width="1" height="209" fill="url(#f8)"/><rect x="742" y="0" width="1" height="209" fill="#3512cd"/><rect x="742" y="0" width="1" height="209" fill="url(#f7)"/><rect x="744" y="0" width="1" height="209" fill="#3311c8"/><rect x="744" y="0" width="1" height="209" fill="url(#f20)"/><rect x="745" y="0" width="1" height="209" fill="#6522ed"/><rect x="747" y="0" width="1" height="209" fill="#4216e4"/><rect x="747" y="0" width="1" height="209" fill="url(#f4)"/><rect x="748" y="0" width="1" height="209" fill="#08032a"/><rect x="750" y="0" width="1" height="209" fill="#280eb4"/><rect x="750" y="0" width="1" height="209" fill="url(#f23)"/><rect x="751" y="0" width="1" height="209" fill="#3d15db"/><rect x="751" y="0" width="1" height="209" fill="url(#f20)"/><rect x="752" y="0" width="1" height="209" fill="#160866"/><rect x="752" y="0" width="1" height="209" fill="url(#f11)"/><rect x="753" y="0" width="1" height="209" fill="#13075a"/><rect x="753" y="0" width="1" height="209" fill="url(#f9)"/><rect x="754" y="0" width="1" height="209" fill="#230ca1"/><rect x="754" y="0" width="1" height="209" fill="url(#f6)"/><rect x="755" y="0" width="1" height="209" fill="#190974"/><rect x="755" y="0" width="1" height="209" fill="url(#f11)"/><rect x="756" y="0" width="1" height="209" fill="#4116e2"/><rect x="757" y="0" width="1" height="209" fill="#240ca4"/><rect x="758" y="0" width="1" height="209" fill="#3c14da"/><rect x="758" y="0" width="1" height="209" fill="url(#f0)"/><rect x="759" y="0" width="1" height="209" fill="#6522ed"/><rect x="759" y="0" width="1" height="209" fill="url(#f1)"/><rect x="760" y="0" width="1" height="209" fill="#3f15df"/><rect x="761" y="0" width="1" height="209" fill="#2e10bf"/><rect x="764" y="0" width="1" height="209" fill="#150762"/><rect x="764" y="0" width="1" height="209" fill="url(#f4)"/><rect x="769" y="0" width="1" height="209" fill="#290eb6"/><rect x="770" y="0" width="1" height="209" fill="#0d0540"/><rect x="773" y="0" width="1" height="209" fill="#2d0fbe"/><rect x="775" y="0" width="1" height="209" fill="#2a0eb8"/><rect x="777" y="0" width="1" height="209" fill="#3612ce"/><rect x="777" y="0" width="1" height="209" fill="url(#f12)"/><rect x="780" y="0" width="1" height="209" fill="#09032d"/><rect x="780" y="0" width="1" height="209" fill="url(#f11)"/><rect x="781" y="0" width="1" height="209" fill="#1a0978"/><rect x="781" y="0" width="1" height="209" fill="url(#f23)"/><rect x="783" y="0" width="1" height="209" fill="#240ca6"/><rect x="783" y="0" width="1" height="209" fill="url(#f5)"/><rect x="784" y="0" width="1" height="209" fill="#3412ca"/><rect x="784" y="0" width="1" height="209" fill="url(#f7)"/><rect x="785" y="0" width="1" height="209" fill="#180872"/><rect x="786" y="0" width="1" height="209" fill="#4517e9"/><rect x="787" y="0" width="1" height="209" fill="#0e0545"/><rect x="787" y="0" width="1" height="209" fill="url(#f0)"/><rect x="788" y="0" width="1" height="209" fill="#290eb7"/><rect x="788" y="0" width="1" height="209" fill="url(#f17)"/><rect x="790" y="0" width="1" height="209" fill="#6522ed"/><rect x="791" y="0" width="1" height="209" fill="#0f054b"/><rect x="791" y="0" width="1" height="209" fill="url(#f11)"/><rect x="792" y="0" width="1" height="209" fill="#280eb4"/><rect x="792" y="0" width="1" height="209" fill="url(#f14)"/><rect x="796" y="0" width="1" height="209" fill="#150762"/><rect x="796" y="0" width="1" height="209" fill="url(#f18)"/><rect x="797" y="0" width="1" height="209" fill="#3111c4"/><rect x="797" y="0" width="1" height="209" fill="url(#f13)"/><rect x="805" y="0" width="1" height="209" fill="#0d0540"/><rect x="807" y="0" width="1" height="209" fill="#6522ed"/><rect x="813" y="0" width="1" height="209" fill="#1c0a82"/><rect x="813" y="0" width="1" height="209" fill="url(#f6)"/><rect x="815" y="0" width="1" height="209" fill="#3b14d8"/><rect x="815" y="0" width="1" height="209" fill="url(#f3)"/><rect x="819" y="0" width="1" height="209" fill="#09032d"/><rect x="819" y="0" width="1" height="209" fill="url(#f22)"/><rect x="823" y="0" width="1" height="209" fill="#3612ce"/><rect x="823" y="0" width="1" height="209" fill="url(#f0)"/><rect x="833" y="0" width="1" height="209" fill="#3612ce"/><rect x="833" y="0" width="1" height="209" fill="url(#f3)"/><rect x="834" y="0" width="1" height="209" fill="#4116e3"/><rect x="842" y="0" width="1" height="209" fill="#230c9e"/><rect x="842" y="0" width="1" height="209" fill="url(#f20)"/><rect x="843" y="0" width="1" height="209" fill="#3311c8"/><rect x="848" y="0" width="1" height="209" fill="#3813d2"/><rect x="852" y="0" width="1" height="209" fill="#120658"/><rect x="871" y="0" width="1" height="209" fill="#1a097a"/><rect x="874" y="0" width="1" height="209" fill="#2b0fbb"/><rect x="874" y="0" width="1" height="209" fill="url(#f12)"/><rect x="886" y="0" width="1" height="209" fill="#260dad"/><rect x="886" y="0" width="1" height="209" fill="url(#f6)"/><rect x="889" y="0" width="1" height="209" fill="#150763"/><rect x="889" y="0" width="1" height="209" fill="url(#f7)"/><rect x="890" y="0" width="1" height="209" fill="#10064e"/><rect x="890" y="0" width="1" height="209" fill="url(#f18)"/><rect x="896" y="0" width="1" height="209" fill="#3e15dd"/><rect x="896" y="0" width="1" height="209" fill="url(#f8)"/><rect x="903" y="0" width="1" height="209" fill="#220c9a"/><rect x="903" y="0" width="1" height="209" fill="url(#f8)"/><rect x="906" y="0" width="1" height="209" fill="#08032c"/><rect x="906" y="0" width="1" height="209" fill="url(#f4)"/><rect x="909" y="0" width="1" height="209" fill="#3412cb"/><rect x="909" y="0" width="1" height="209" fill="url(#f21)"/><rect x="911" y="0" width="1" height="209" fill="#521ceb"/><rect x="916" y="0" width="1" height="209" fill="#1a0977"/><rect x="916" y="0" width="1" height="209" fill="url(#f11)"/><rect x="922" y="0" width="1" height="209" fill="#551dec"/><rect x="922" y="0" width="1" height="209" fill="url(#f0)"/><rect x="927" y="0" width="1" height="209" fill="#1c0a81"/><rect x="930" y="0" width="1" height="209" fill="#0e0546"/><rect x="930" y="0" width="1" height="209" fill="url(#f8)"/><rect x="934" y="0" width="1" height="209" fill="#2d0fbe"/><rect x="934" y="0" width="1" height="209" fill="url(#f9)"/><rect x="935" y="0" width="1" height="209" fill="#240ca5"/><rect x="935" y="0" width="1" height="209" fill="url(#f17)"/><rect x="938" y="0" width="1" height="209" fill="#3010c3"/><rect x="938" y="0" width="1" height="209" fill="url(#f8)"/><rect x="943" y="0" width="1" height="209" fill="#0e0544"/><rect x="951" y="0" width="1" height="209" fill="#140761"/><rect x="951" y="0" width="1" height="209" fill="url(#f2)"/><rect x="959" y="0" width="1" height="209" fill="#b048c8"/><rect x="978" y="0" width="1" height="209" fill="#4517ea"/><rect x="978" y="0" width="1" height="209" fill="url(#f20)"/><rect x="982" y="0" width="1" height="209" fill="#1d0a86"/><rect x="982" y="0" width="1" height="209" fill="url(#f4)"/><rect x="983" y="0" width="1" height="209" fill="#280eb5"/><rect x="983" y="0" width="1" height="209" fill="url(#f21)"/><rect x="986" y="0" width="1" height="209" fill="#1e0a8b"/><rect x="986" y="0" width="1" height="209" fill="url(#f22)"/><rect x="989" y="0" width="1" height="209" fill="#190973"/><rect x="989" y="0" width="1" height="209" fill="url(#f10)"/><rect x="991" y="0" width="1" height="209" fill="#05021a"/><rect x="991" y="0" width="1" height="209" fill="url(#f4)"/><rect x="996" y="0" width="1" height="209" fill="#3a14d5"/><rect x="996" y="0" width="1" height="209" fill="url(#f11)"/><rect x="998" y="0" width="1" height="209" fill="#3010c3"/><rect x="998" y="0" width="1" height="209" fill="url(#f9)"/><rect x="1000" y="0" width="1" height="209" fill="#180871"/><rect x="1000" y="0" width="1" height="209" fill="url(#f14)"/><rect x="1004" y="0" width="1" height="209" fill="#010007"/><rect x="1004" y="0" width="1" height="209" fill="url(#f23)"/><rect x="1008" y="0" width="1" height="209" fill="#2d0fbd"/><rect x="1008" y="0" width="1" height="209" fill="url(#f13)"/></svg>
<div style="left:212px;top:501px;width:1035px;height:1px;background:#000"></div>
<div style="left:212px;top:502px;width:1035px;height:1px;background:#c8c8c8"></div>
<div class="t" style="left:217px;top:494px;font-size:9px;line-height:9px;color:#000;letter-spacing:-0.6px;font-weight:bold;">ms</div>
<svg style="left:235px;top:503px" width="1012" height="351"><rect width="100%" height="100%" fill="#000"/><g fill="#6c6c6c"><rect x="17" y="0" width="1" height="351"/><rect x="58" y="0" width="1" height="351"/><rect x="99" y="0" width="1" height="351"/><rect x="140" y="0" width="1" height="351"/><rect x="181" y="0" width="1" height="351"/><rect x="222" y="0" width="1" height="351"/><rect x="263" y="0" width="1" height="351"/><rect x="304" y="0" width="1" height="351"/><rect x="345" y="0" width="1" height="351"/><rect x="386" y="0" width="1" height="351"/><rect x="427" y="0" width="1" height="351"/><rect x="468" y="0" width="1" height="351"/><rect x="509" y="0" width="1" height="351"/><rect x="550" y="0" width="1" height="351"/><rect x="591" y="0" width="1" height="351"/><rect x="632" y="0" width="1" height="351"/><rect x="673" y="0" width="1" height="351"/><rect x="714" y="0" width="1" height="351"/><rect x="755" y="0" width="1" height="351"/><rect x="796" y="0" width="1" height="351"/><rect x="837" y="0" width="1" height="351"/><rect x="878" y="0" width="1" height="351"/><rect x="919" y="0" width="1" height="351"/><rect x="960" y="0" width="1" height="351"/><rect x="1001" y="0" width="1" height="351"/><rect x="0" y="26" width="1012" height="1"/><rect x="0" y="52" width="1012" height="1"/><rect x="0" y="78" width="1012" height="1"/><rect x="0" y="104" width="1012" height="1"/><rect x="0" y="129" width="1012" height="1"/><rect x="0" y="155" width="1012" height="1"/><rect x="0" y="181" width="1012" height="1"/><rect x="0" y="207" width="1012" height="1"/><rect x="0" y="233" width="1012" height="1"/><rect x="0" y="259" width="1012" height="1"/><rect x="0" y="285" width="1012" height="1"/><rect x="0" y="311" width="1012" height="1"/><rect x="0" y="336" width="1012" height="1"/></g><polyline points="0,215.2 1,217.0 2,215.4 3,211.3 4,215.8 5,215.1 6,210.6 7,221.4 8,215.1 9,214.4 10,213.5 11,213.6 12,215.8 13,217.1 14,215.5 15,216.5 16,226.7 17,203.3 18,213.6 19,215.3 20,219.3 21,217.5 22,222.4 23,214.9 24,214.6 25,215.7 26,213.4 27,222.5 28,215.4 29,215.1 30,220.7 31,212.0 32,211.4 33,213.9 34,213.6 35,213.5 36,219.5 37,217.4 38,212.5 39,211.4 40,213.7 41,213.2 42,210.6 43,210.1 44,213.8 45,212.8 46,217.0 47,213.3 48,214.1 49,216.4 50,214.2 51,212.1 52,215.9 53,218.2 54,210.5 55,215.0 56,217.3 57,211.9 58,214.4 59,212.4 60,217.7 61,207.6 62,210.5 63,213.4 64,215.6 65,213.3 66,210.7 67,212.5 68,211.9 69,212.4 70,207.9 71,216.3 72,207.3 73,210.8 74,213.3 75,210.6 76,214.0 77,211.9 78,222.2 79,211.7 80,213.6 81,211.7 82,213.0 83,215.0 84,207.4 85,212.3 86,217.0 87,218.5 88,214.9 89,209.4 90,213.0 91,204.5 92,212.0 93,212.8 94,209.5 95,209.7 96,217.1 97,211.6 98,216.0 99,211.5 100,211.8 101,213.9 102,214.4 103,208.0 104,214.7 105,211.3 106,212.6 107,214.4 108,208.9 109,208.6 110,220.6 111,215.6 112,210.6 113,211.2 114,213.0 115,211.1 116,210.6 117,211.2 118,212.2 119,217.1 120,214.4 121,211.1 122,211.8 123,217.7 124,210.3 125,207.3 126,205.2 127,211.3 128,212.6 129,213.1 130,208.9 131,213.0 132,209.9 133,210.4 134,207.3 135,209.3 136,213.7 137,217.5 138,209.1 139,213.7 140,209.8 141,204.3 142,213.9 143,216.6 144,203.7 145,209.3 146,206.0 147,207.2 148,210.0 149,203.0 150,212.9 151,204.9 152,212.0 153,214.0 154,212.4 155,209.5 156,208.6 157,208.0 158,220.4 159,211.4 160,204.6 161,220.7 162,211.3 163,210.1 164,209.5 165,211.3 166,210.2 167,208.8 168,206.2 169,209.0 170,207.8 171,208.3 172,208.7 173,204.9 174,211.0 175,201.6 176,202.7 177,213.1 178,212.7 179,202.0 180,202.8 181,214.4 182,212.2 183,212.1 184,209.2 185,213.5 186,213.5 187,205.1 188,206.5 189,213.1 190,210.8 191,215.7 192,206.2 193,214.3 194,209.9 195,212.5 196,213.0 197,190.6 198,191.7 199,195.0 200,192.0 201,187.3 202,192.3 203,195.2 204,193.0 205,189.5 206,190.6 207,193.7 208,193.4 209,194.8 210,185.4 211,187.8 212,187.4 213,194.6 214,196.9 215,178.5 216,191.8 217,189.5 218,187.3 219,194.3 220,186.5 221,192.4 222,186.9 223,195.6 224,189.7 225,189.7 226,185.9 227,192.2 228,195.8 229,194.8 230,192.1 231,190.0 232,180.9 233,187.3 234,191.2 235,189.7 236,192.2 237,189.7 238,192.5 239,190.4 240,195.3 241,191.8 242,189.9 243,191.1 244,188.9 245,193.2 246,190.2 247,193.7 248,193.6 249,194.9 250,194.3 251,188.4 252,195.6 253,190.8 254,193.2 255,187.3 256,196.0 257,192.4 258,190.2 259,188.6 260,188.7 261,190.2 262,189.8 263,215.2 264,213.6 265,206.2 266,214.4 267,211.7 268,216.9 269,214.4 270,212.3 271,209.7 272,209.8 273,215.3 274,216.7 275,214.1 276,213.5 277,214.6 278,211.1 279,210.5 280,208.3 281,206.8 282,214.2 283,209.8 284,210.1 285,214.2 286,210.7 287,216.4 288,210.8 289,212.7 290,208.4 291,215.4 292,212.4 293,215.1 294,214.2 295,207.2 296,205.8 297,210.4 298,208.9 299,213.7 300,217.5 301,217.8 302,216.5 303,217.9 304,208.6 305,214.0 306,213.3 307,211.1 308,214.7 309,209.2 310,213.1 311,211.4 312,206.3 313,216.0 314,215.4 315,214.8 316,203.4 317,216.2 318,211.1 319,206.4 320,211.7 321,212.9 322,213.1 323,207.4 324,217.4 325,215.1 326,205.7 327,208.6 328,216.8 329,214.1 330,218.0 331,212.5 332,216.8 333,215.7 334,209.3 335,215.5 336,216.0 337,209.6 338,210.2 339,214.8 340,214.0 341,214.1 342,210.0 343,208.7 344,210.8 345,215.4 346,212.6 347,212.3 348,213.0 349,211.9 350,213.3 351,214.6 352,208.7 353,215.4 354,215.2 355,218.1 356,216.7 357,203.0 358,210.7 359,208.8 360,213.6 361,211.3 362,213.8 363,213.6 364,209.0 365,215.0 366,207.9 367,211.2 368,212.2 369,214.9 370,211.2 371,212.2 372,213.8 373,211.4 374,212.3 375,213.4 376,213.5 377,216.6 378,212.5 379,209.7 380,213.6 381,211.6 382,216.3 383,211.6 384,212.9 385,209.4 386,207.0 387,213.5 388,214.4 389,213.8 390,214.2 391,203.3 392,209.0 393,224.4 394,210.4 395,213.3 396,215.7 397,208.3 398,213.0 399,211.6 400,213.9 401,213.3 402,212.1 403,210.2 404,212.4 405,208.3 406,213.4 407,213.3 408,212.4 409,215.3 410,214.5 411,215.1 412,218.7 413,217.1 414,211.5 415,214.3 416,215.6 417,204.7 418,214.2 419,209.4 420,213.2 421,218.0 422,216.2 423,215.7 424,213.7 425,215.5 426,215.6 427,208.2 428,215.0 429,214.5 430,212.9 431,214.5 432,214.4 433,215.7 434,218.5 435,214.4 436,216.0 437,218.0 438,217.4 439,211.3 440,227.2 441,213.5 442,212.1 443,211.9 444,213.7 445,212.1 446,217.5 447,220.1 448,217.2 449,217.7 450,213.3 451,207.8 452,208.3 453,215.7 454,211.2 455,220.8 456,219.4 457,218.8 458,214.7 459,211.7 460,213.8 461,217.0 462,212.8 463,210.6 464,210.6 465,207.0 466,217.3 467,215.9 468,208.9 469,216.8 470,219.5 471,211.7 472,213.1 473,215.2 474,215.3 475,215.7 476,212.7 477,210.6 478,211.4 479,216.8 480,214.7 481,215.2 482,219.3 483,208.6 484,217.5 485,210.0 486,212.2 487,213.1 488,209.7 489,212.0 490,218.6 491,213.3 492,217.1 493,217.5 494,211.1 495,213.6 496,212.2 497,218.2 498,214.2 499,212.8 500,213.6 501,213.3 502,216.0 503,215.8 504,216.2 505,217.2 506,213.5 507,213.9 508,197.0 509,181.0 510,197.0 511,217.5 512,220.8 513,219.1 514,212.6 515,211.3 516,213.1 517,211.7 518,216.4 519,209.2 520,207.9 521,213.4 522,223.1 523,216.3 524,211.1 525,217.6 526,209.9 527,214.7 528,212.9 529,211.5 530,212.6 531,214.3 532,211.0 533,214.1 534,216.4 535,214.8 536,215.9 537,211.6 538,213.5 539,211.2 540,221.9 541,216.4 542,213.9 543,216.4 544,214.3 545,209.7 546,216.2 547,215.9 548,211.1 549,210.8 550,218.8 551,212.4 552,215.2 553,211.6 554,210.7 555,213.5 556,216.1 557,216.3 558,208.4 559,214.2 560,211.1 561,216.5 562,215.7 563,208.8 564,214.4 565,210.8 566,214.1 567,208.8 568,217.5 569,217.8 570,214.2 571,215.5 572,214.1 573,216.5 574,210.8 575,207.1 576,214.1 577,213.3 578,218.7 579,214.5 580,217.5 581,215.6 582,219.9 583,215.9 584,212.6 585,212.5 586,215.6 587,219.7 588,211.7 589,211.1 590,213.6 591,215.0 592,211.9 593,213.0 594,215.5 595,220.5 596,217.2 597,213.9 598,213.0 599,214.8 600,213.8 601,211.4 602,212.6 603,216.0 604,211.4 605,214.3 606,215.4 607,216.9 608,219.6 609,213.8 610,213.9 611,210.0 612,220.7 613,215.2 614,214.5 615,217.5 616,210.5 617,214.6 618,219.4 619,215.6 620,216.6 621,212.6 622,217.1 623,216.1 624,220.6 625,213.9 626,212.7 627,216.6 628,215.7 629,217.1 630,215.6 631,210.1 632,213.4 633,215.5 634,214.2 635,214.7 636,219.4 637,217.6 638,220.0 639,211.9 640,209.9 641,208.5 642,213.9 643,215.9 644,216.0 645,218.1 646,214.1 647,211.9 648,218.2 649,216.1 650,214.5 651,212.2 652,212.0 653,213.3 654,214.4 655,212.5 656,206.9 657,213.6 658,209.6 659,208.2 660,200.8 661,206.9 662,207.1 663,205.4 664,204.9 665,205.4 666,209.2 667,202.3 668,205.3 669,205.2 670,194.2 671,200.5 672,201.0 673,200.0 674,195.2 675,196.8 676,196.5 677,192.8 678,195.2 679,193.6 680,191.3 681,196.7 682,196.6 683,192.5 684,200.1 685,198.9 686,197.4 687,203.2 688,196.6 689,199.6 690,194.6 691,195.8 692,201.4 693,198.2 694,190.5 695,202.7 696,198.2 697,201.9 698,198.0 699,197.1 700,201.4 701,207.7 702,196.4 703,194.8 704,196.4 705,198.2 706,193.1 707,191.3 708,202.0 709,196.8 710,196.5 711,197.3 712,199.4 713,195.7 714,201.1 715,193.6 716,198.2 717,194.7 718,189.4 719,195.2 720,194.8 721,194.0 722,218.9 723,212.6 724,215.6 725,223.1 726,220.4 727,220.0 728,218.7 729,221.4 730,210.9 731,221.5 732,212.4 733,211.8 734,215.8 735,216.0 736,219.4 737,217.4 738,218.5 739,216.8 740,209.0 741,214.7 742,217.0 743,213.8 744,219.3 745,223.2 746,212.6 747,215.8 748,215.5 749,213.8 750,213.0 751,218.8 752,219.6 753,218.0 754,215.1 755,216.1 756,217.4 757,216.1 758,217.6 759,216.2 760,217.9 761,214.2 762,211.9 763,218.9 764,212.1 765,210.1 766,208.2 767,208.4 768,216.7 769,213.5 770,216.7 771,215.4 772,214.7 773,218.7 774,212.1 775,214.2 776,221.2 777,212.3 778,216.2 779,217.6 780,214.9 781,216.3 782,216.3 783,219.5 784,214.7 785,210.1 786,214.9 787,216.7 788,220.4 789,213.7 790,214.5 791,214.5 792,219.7 793,217.4 794,211.3 795,215.3 796,205.6 797,211.9 798,217.4 799,217.7 800,215.2 801,216.3 802,220.4 803,211.8 804,215.7 805,216.4 806,217.4 807,220.2 808,216.8 809,218.2 810,208.3 811,215.1 812,214.1 813,214.2 814,218.9 815,215.6 816,214.3 817,218.4 818,218.5 819,216.1 820,219.8 821,215.7 822,211.3 823,213.9 824,221.2 825,220.9 826,211.8 827,209.5 828,220.6 829,218.4 830,213.8 831,214.8 832,220.4 833,214.8 834,219.1 835,208.7 836,215.8 837,213.9 838,214.0 839,217.6 840,213.0 841,214.2 842,214.6 843,213.2 844,212.1 845,217.4 846,220.6 847,210.1 848,218.1 849,215.3 850,220.1 851,217.5 852,218.8 853,214.3 854,222.0 855,214.2 856,224.1 857,214.4 858,213.0 859,215.1 860,212.7 861,219.4 862,209.1 863,223.8 864,218.7 865,218.3 866,213.9 867,213.3 868,213.3 869,215.3 870,217.8 871,211.8 872,214.9 873,217.0 874,214.1 875,215.4 876,216.4 877,213.2 878,216.6 879,217.0 880,216.2 881,215.2 882,205.5 883,218.1 884,216.1 885,218.0 886,208.9 887,214.0 888,217.8 889,218.3 890,213.2 891,212.8 892,220.6 893,217.3 894,214.5 895,219.3 896,221.6 897,215.9 898,221.2 899,217.4 900,219.5 901,218.5 902,218.0 903,211.2 904,214.3 905,213.0 906,215.0 907,215.6 908,216.1 909,219.4 910,221.0 911,217.2 912,213.4 913,212.8 914,217.1 915,218.8 916,217.5 917,218.1 918,214.8 919,209.0 920,218.8 921,216.2 922,222.0 923,213.8 924,219.0 925,218.8 926,215.6 927,212.8 928,219.1 929,217.7 930,215.4 931,214.6 932,215.2 933,211.5 934,222.7 935,213.4 936,212.4 937,213.4 938,216.2 939,215.8 940,215.0 941,214.2 942,215.0 943,205.9 944,215.7 945,214.1 946,214.7 947,217.8 948,215.8 949,213.8 950,215.3 951,216.2 952,216.0 953,213.7 954,218.5 955,211.9 956,217.8 957,211.8 958,219.1 959,193.0 960,213.9 961,208.9 962,215.9 963,210.9 964,216.7 965,216.7 966,209.4 967,214.5 968,219.9 969,212.2 970,214.7 971,218.7 972,217.7 973,223.2 974,220.6 975,213.5 976,219.8 977,208.1 978,217.7 979,214.7 980,217.6 981,215.4 982,218.0 983,214.3 984,218.0 985,215.7 986,222.7 987,212.9 988,212.0 989,218.0 990,216.2 991,217.7 992,217.4 993,216.5 994,215.9 995,231.0 996,215.6 997,220.1 998,219.9 999,214.4 1000,219.5 1001,212.8 1002,208.5 1003,210.8 1004,216.5 1005,217.1 1006,217.9 1007,220.6 1008,219.8 1009,213.7 1010,216.4 1011,216.7" fill="none" stroke="#f4c450" stroke-width="1.1"/></svg>
<div style="left:1090px;top:505px;width:156px;height:16px;background:#000"></div>
<div class="t" style="left:1093px;top:508px;font-size:12px;line-height:12px;color:#e8c478;letter-spacing:-1.2px;">-29663086 Hz   -136.00 dB</div>
<svg style="left:212px;top:503px" width="23" height="352"><g fill="#000"><rect x="16" y="13" width="6" height="1"/><rect x="3" y="26" width="19" height="1"/><rect x="16" y="39" width="6" height="1"/><rect x="3" y="52" width="19" height="1"/><rect x="16" y="65" width="6" height="1"/><rect x="3" y="78" width="19" height="1"/><rect x="16" y="91" width="6" height="1"/><rect x="3" y="104" width="19" height="1"/><rect x="16" y="116" width="6" height="1"/><rect x="3" y="129" width="19" height="1"/><rect x="16" y="142" width="6" height="1"/><rect x="3" y="155" width="19" height="1"/><rect x="16" y="168" width="6" height="1"/><rect x="3" y="181" width="19" height="1"/><rect x="16" y="194" width="6" height="1"/><rect x="3" y="207" width="19" height="1"/><rect x="16" y="220" width="6" height="1"/><rect x="3" y="233" width="19" height="1"/><rect x="16" y="246" width="6" height="1"/><rect x="3" y="259" width="19" height="1"/><rect x="16" y="272" width="6" height="1"/><rect x="3" y="285" width="19" height="1"/><rect x="16" y="298" width="6" height="1"/><rect x="3" y="311" width="19" height="1"/><rect x="16" y="323" width="6" height="1"/><rect x="3" y="336" width="19" height="1"/><rect x="16" y="349" width="6" height="1"/></g></svg>
<div style="left:234px;top:503px;width:1px;height:352px;background:#000"></div>
<div class="t" style="left:217px;top:506px;font-size:10px;line-height:10px;color:#000;letter-spacing:-1.0px;font-weight:bold;">0</div>
<div class="t" style="left:213px;top:532px;font-size:10px;line-height:10px;color:#000;letter-spacing:-1.0px;font-weight:bold;">-10</div>
<div class="t" style="left:213px;top:558px;font-size:10px;line-height:10px;color:#000;letter-spacing:-1.0px;font-weight:bold;">-20</div>
<div class="t" style="left:213px;top:584px;font-size:10px;line-height:10px;color:#000;letter-spacing:-1.0px;font-weight:bold;">-30</div>
<div class="t" style="left:213px;top:610px;font-size:10px;line-height:10px;color:#000;letter-spacing:-1.0px;font-weight:bold;">-40</div>
<div class="t" style="left:213px;top:635px;font-size:10px;line-height:10px;color:#000;letter-spacing:-1.0px;font-weight:bold;">-50</div>
<div class="t" style="left:213px;top:661px;font-size:10px;line-height:10px;color:#000;letter-spacing:-1.0px;font-weight:bold;">-60</div>
<div class="t" style="left:213px;top:687px;font-size:10px;line-height:10px;color:#000;letter-spacing:-1.0px;font-weight:bold;">-70</div>
<div class="t" style="left:213px;top:713px;font-size:10px;line-height:10px;color:#000;letter-spacing:-1.0px;font-weight:bold;">-80</div>
<div class="t" style="left:213px;top:739px;font-size:10px;line-height:10px;color:#000;letter-spacing:-1.0px;font-weight:bold;">-90</div>
<div class="t" style="left:213px;top:765px;font-size:10px;line-height:10px;color:#000;letter-spacing:-1.0px;font-weight:bold;">-100</div>
<div class="t" style="left:213px;top:791px;font-size:10px;line-height:10px;color:#000;letter-spacing:-1.0px;font-weight:bold;">-110</div>
<div class="t" style="left:213px;top:817px;font-size:10px;line-height:10px;color:#000;letter-spacing:-1.0px;font-weight:bold;">-120</div>
<div class="t" style="left:216px;top:846px;font-size:9px;line-height:9px;color:#000;letter-spacing:-0.6px;font-weight:bold;">dB</div>
<div style="left:212px;top:854px;width:1035px;height:1px;background:#000"></div>
<div style="left:212px;top:855px;width:1035px;height:16px;background:#808080"></div>
<div style="left:214px;top:857px;width:12px;height:13px;background:#000"></div>
<svg style="left:214px;top:857px" width="12" height="13"><path d="M0 6 L12 0 V12 Z" fill="#d0d0d0"/></svg>
<div style="left:227px;top:857px;width:4px;height:13px;background:#000"></div>
<div style="left:232px;top:857px;width:990px;height:12px;background:#d6d6d6;border-top:1px solid #f4f4f4;border-bottom:2px solid #8a8a8a"></div>
<div style="left:1222px;top:857px;width:11px;height:13px;background:#000"></div>
<div style="left:1233px;top:857px;width:12px;height:13px;background:#000"></div>
<div style="left:212px;top:870px;width:1035px;height:1px;background:#e8e8e8"></div>
<svg style="left:1233px;top:857px" width="12" height="13"><path d="M12 6 L0 0 V12 Z" fill="#d0d0d0"/></svg></body></html>
